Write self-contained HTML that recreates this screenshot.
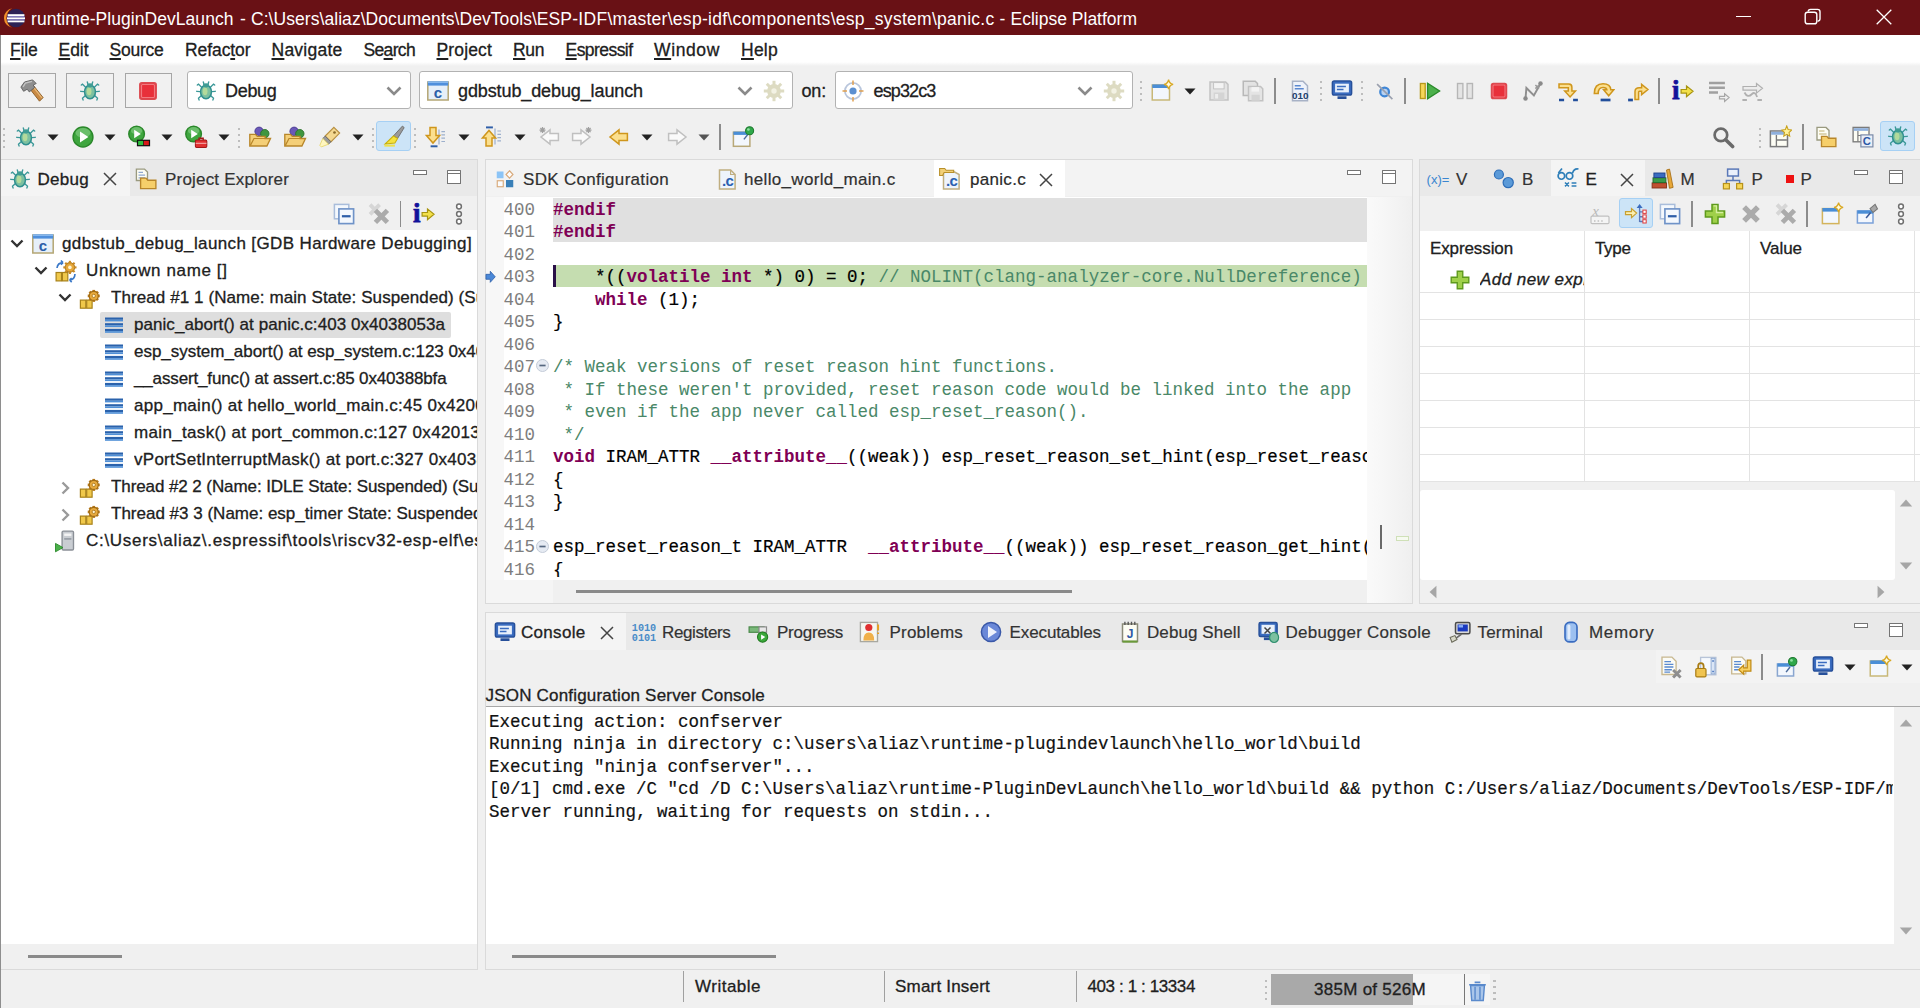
<!DOCTYPE html><html><head><meta charset="utf-8"><title>runtime-PluginDevLaunch - Eclipse Platform</title><style>
html,body{margin:0;padding:0;overflow:hidden;}
body{width:1920px;height:1008px;overflow:hidden;background:#f0f0f0;position:relative;font-family:"Liberation Sans",sans-serif;}
div,span.t,svg{position:absolute;}
span.t{white-space:pre;-webkit-text-stroke:0.3px;}
u{text-decoration-thickness:1.5px;text-underline-offset:2px;}
pre{margin:0;position:absolute;font-family:"Liberation Mono",monospace;white-space:pre;overflow:hidden;-webkit-text-stroke:0.2px;}
pre b{font-weight:700;-webkit-text-stroke:0;}
</style></head><body>
<div style="left:0px;top:0px;width:1920px;height:34.5px;background:#691115;"></div>
<svg style="left:4px;top:7px" width="22" height="22" viewBox="0 0 22 22"><path d="M8 1.2 A10 10 0 0 0 8 20.8 A11.4 11.4 0 0 1 8 1.2 Z" fill="#f0902a"/><circle cx="12" cy="11" r="9.2" fill="#2c2255"/><rect x="3.6" y="7.2" width="16.8" height="1.9" fill="#fff"/><rect x="3" y="10.3" width="18" height="1.9" fill="#fff"/><rect x="3.6" y="13.4" width="16.8" height="1.9" fill="#fff"/><rect x="3.6" y="9.1" width="16.8" height="1.2" fill="#8c86c8"/><rect x="3.4" y="12.2" width="17.2" height="1.2" fill="#8c86c8"/></svg>
<span class="t" id="t0" style="left:31px;top:6.75px;line-height:24px;font-size:17.5px;color:#ffffff;letter-spacing:0.049px;-webkit-text-stroke:0px;">runtime-PluginDevLaunch</span>
<span class="t" id="t1" style="left:240px;top:6.75px;line-height:24px;font-size:17.5px;color:#ffffff;letter-spacing:0.062px;-webkit-text-stroke:0px;">-</span>
<span class="t" id="t2" style="left:251px;top:6.75px;line-height:24px;font-size:17.5px;color:#ffffff;letter-spacing:0.055px;-webkit-text-stroke:0px;">C:\Users\aliaz\Documents\DevTools\ES</span>
<span class="t" id="t3" style="left:560.3px;top:6.75px;line-height:24px;font-size:17.5px;color:#ffffff;letter-spacing:0.281px;-webkit-text-stroke:0px;">P-IDF\master\esp-idf\components\esp_system\panic.c</span>
<span class="t" id="t4" style="left:999.5px;top:6.75px;line-height:24px;font-size:17.5px;color:#ffffff;letter-spacing:0.062px;-webkit-text-stroke:0px;">-</span>
<span class="t" id="t5" style="left:1010.5px;top:6.75px;line-height:24px;font-size:17.5px;color:#ffffff;letter-spacing:0.004px;-webkit-text-stroke:0px;">Eclipse Platform</span>
<div style="left:1736px;top:16px;width:15px;height:1.2px;background:#fff;"></div>
<svg style="left:1803px;top:7px" width="20" height="20" viewBox="0 0 20 20"><rect x="2.2" y="5.2" width="11.6" height="11.6" rx="2.4" fill="none" stroke="#fff" stroke-width="1.4"/><path d="M5.2 4.6 Q5.2 2.4 7.6 2.4 H14.6 Q17 2.4 17 4.8 V11.8 Q17 14 14.6 14.2" fill="none" stroke="#fff" stroke-width="1.4"/></svg>
<svg style="left:1874.5px;top:7.800000000000001px" width="18" height="18" viewBox="0 0 18 18"><path d="M1.7000000000000002 1.7000000000000002 L16.3 16.3 M16.3 1.7000000000000002 L1.7000000000000002 16.3" stroke="#fff" stroke-width="1.3" fill="none"/></svg>
<div style="left:0px;top:35px;width:1920px;height:27px;background:#ffffff;"></div>
<div style="left:0;top:62px;width:1920px;height:4px;background:linear-gradient(#fff,#f0f0f0)"></div>
<span class="t" id="t6" style="left:10px;top:37.50px;line-height:24px;font-size:17.5px;color:#202020;letter-spacing:-0.180px;"><u>F</u>ile</span>
<span class="t" id="t7" style="left:58.5px;top:37.50px;line-height:24px;font-size:17.5px;color:#202020;letter-spacing:-0.043px;"><u>E</u>dit</span>
<span class="t" id="t8" style="left:109.5px;top:37.50px;line-height:24px;font-size:17.5px;color:#202020;letter-spacing:-0.245px;"><u>S</u>ource</span>
<span class="t" id="t9" style="left:185px;top:37.50px;line-height:24px;font-size:17.5px;color:#202020;letter-spacing:-0.082px;">Refac<u>t</u>or</span>
<span class="t" id="t10" style="left:271.5px;top:37.50px;line-height:24px;font-size:17.5px;color:#202020;letter-spacing:0.240px;"><u>N</u>avigate</span>
<span class="t" id="t11" style="left:363.5px;top:37.50px;line-height:24px;font-size:17.5px;color:#202020;letter-spacing:-0.659px;">Se<u>a</u>rch</span>
<span class="t" id="t12" style="left:436.5px;top:37.50px;line-height:24px;font-size:17.5px;color:#202020;letter-spacing:0.145px;"><u>P</u>roject</span>
<span class="t" id="t13" style="left:513px;top:37.50px;line-height:24px;font-size:17.5px;color:#202020;letter-spacing:-0.370px;"><u>R</u>un</span>
<span class="t" id="t14" style="left:565.5px;top:37.50px;line-height:24px;font-size:17.5px;color:#202020;letter-spacing:-0.554px;"><u>E</u>spressif</span>
<span class="t" id="t15" style="left:654px;top:37.50px;line-height:24px;font-size:17.5px;color:#202020;letter-spacing:0.622px;"><u>W</u>indow</span>
<span class="t" id="t16" style="left:741px;top:37.50px;line-height:24px;font-size:17.5px;color:#202020;letter-spacing:0.250px;"><u>H</u>elp</span>
<div style="left:8px;top:73px;width:46px;height:34px;background:#f1f1f1;border:1.5px solid #a6a6a6;box-sizing:border-box;width:47.5px;height:35px;"></div>
<div style="left:66px;top:73px;width:46px;height:34px;background:#f1f1f1;border:1.5px solid #a6a6a6;box-sizing:border-box;width:47.5px;height:35px;"></div>
<div style="left:124.5px;top:73px;width:46px;height:34px;background:#f1f1f1;border:1.5px solid #a6a6a6;box-sizing:border-box;width:47.5px;height:35px;"></div>
<svg style="left:19.5px;top:78.5px" width="24" height="24" viewBox="0 0 16 16"><path d="M6.4 6.4 L9.2 4.6 L15.4 12.4 L13 14.8 Z" fill="#c98a44" stroke="#8a5a22" stroke-width=".6"/><path d="M7.4 6.6 L9 5.6 L14.6 12.6" fill="none" stroke="#e8b878" stroke-width=".8"/><path d="M.6 5.4 L3 2 L8.4 .6 L10.8 3 L8.8 4 L9.8 5.6 L6.2 8.6 L4.8 6.8 L2.4 8.2 Z" fill="#8e8e8e" stroke="#5e5e5e" stroke-width=".6"/><path d="M2 5.2 L3.6 2.8 L8 1.6" fill="none" stroke="#c4c4c4" stroke-width=".9"/></svg>
<svg style="left:78.0px;top:78.5px" width="24" height="24" viewBox="0 0 16 16"><g stroke="#3a9898" stroke-width=".9" fill="none" stroke-linecap="round"><path d="M5.2 5.6 L3 3.4 L2.2 4 M10.8 5.6 L13 3.4 L13.8 4 M4.3 8.4 L1.8 8.2 M11.7 8.4 L14.2 8.2 M5 11 L3 12.8 L3.4 14 M11 11 L13 12.8 L12.6 14 M6.8 4 L6.2 2 M9.2 4 L9.8 2"/></g><ellipse cx="8" cy="8.6" rx="3.6" ry="4.6" fill="#7cc0a0" stroke="#2f8f8f" stroke-width="1"/><ellipse cx="7.4" cy="8.2" rx="1.6" ry="2.6" fill="#b9dd9a" opacity=".9"/><ellipse cx="8" cy="4.2" rx="2" ry="1.4" fill="#3f9c94"/></svg>
<svg style="left:135.0px;top:77.5px" width="26" height="26" viewBox="0 0 16 16"><rect x="3" y="3" width="10" height="10" rx="1.2" fill="#e8303a" stroke="#dc4a50" stroke-width="1"/><rect x="4" y="4" width="8" height="8" rx=".6" fill="none" stroke="#f27a80" stroke-width=".7"/></svg>
<div style="left:186.5px;top:71px;width:224.0px;height:38px;background:#fff;border:1.5px solid #b2b2b2;border-radius:3px;box-sizing:border-box;"></div>
<div style="left:419px;top:71px;width:373.5px;height:38px;background:#fff;border:1.5px solid #b2b2b2;border-radius:3px;box-sizing:border-box;"></div>
<div style="left:834.5px;top:71px;width:298.5px;height:38px;background:#fff;border:1.5px solid #b2b2b2;border-radius:3px;box-sizing:border-box;"></div>
<svg style="left:194.0px;top:78.5px" width="24" height="24" viewBox="0 0 16 16"><g stroke="#3a9898" stroke-width=".9" fill="none" stroke-linecap="round"><path d="M5.2 5.6 L3 3.4 L2.2 4 M10.8 5.6 L13 3.4 L13.8 4 M4.3 8.4 L1.8 8.2 M11.7 8.4 L14.2 8.2 M5 11 L3 12.8 L3.4 14 M11 11 L13 12.8 L12.6 14 M6.8 4 L6.2 2 M9.2 4 L9.8 2"/></g><ellipse cx="8" cy="8.6" rx="3.6" ry="4.6" fill="#7cc0a0" stroke="#2f8f8f" stroke-width="1"/><ellipse cx="7.4" cy="8.2" rx="1.6" ry="2.6" fill="#b9dd9a" opacity=".9"/><ellipse cx="8" cy="4.2" rx="2" ry="1.4" fill="#3f9c94"/></svg>
<span class="t" id="t17" style="left:225px;top:79.25px;line-height:24px;font-size:18px;color:#202020;letter-spacing:-0.309px;">Debug</span>
<svg style="left:385px;top:84.5px" width="18" height="12" viewBox="0 0 18 12"><path d="M2.5 2.5 L9 9 L15.5 2.5" fill="none" stroke="#8a8a8a" stroke-width="2.6"/></svg>
<svg style="left:426.0px;top:78.5px" width="24" height="24" viewBox="0 0 16 16"><rect x="1.2" y="2" width="13.6" height="12" fill="#e6eff9" stroke="#b4a674" stroke-width="1"/><rect x="1.2" y="1.6" width="13.6" height="2.8" fill="#4f8fdc"/><rect x="1.2" y="1.6" width="13.6" height="1" fill="#8cbcf0"/><text x="8" y="12.4" font-family="Liberation Sans, sans-serif" font-size="10" font-weight="700" text-anchor="middle" fill="#2c5ea8">c</text></svg>
<span class="t" id="t18" style="left:458px;top:79.25px;line-height:24px;font-size:18px;color:#202020;letter-spacing:-0.109px;">gdbstub_debug_launch</span>
<svg style="left:736px;top:84.5px" width="18" height="12" viewBox="0 0 18 12"><path d="M2.5 2.5 L9 9 L15.5 2.5" fill="none" stroke="#8a8a8a" stroke-width="2.6"/></svg>
<svg style="left:761.5px;top:78.5px" width="24" height="24" viewBox="0 0 16 16"><g fill="#dddbc2"><circle cx="8" cy="8" r="4.6"/><rect x="7" y="1.2" width="2" height="3" transform="rotate(0 8 8)"/><rect x="7" y="1.2" width="2" height="3" transform="rotate(45 8 8)"/><rect x="7" y="1.2" width="2" height="3" transform="rotate(90 8 8)"/><rect x="7" y="1.2" width="2" height="3" transform="rotate(135 8 8)"/><rect x="7" y="1.2" width="2" height="3" transform="rotate(180 8 8)"/><rect x="7" y="1.2" width="2" height="3" transform="rotate(225 8 8)"/><rect x="7" y="1.2" width="2" height="3" transform="rotate(270 8 8)"/><rect x="7" y="1.2" width="2" height="3" transform="rotate(315 8 8)"/></g><circle cx="8" cy="8" r="1.8" fill="#f3f2e4"/></svg>
<span class="t" id="t19" style="left:801.5px;top:79.25px;line-height:24px;font-size:18px;color:#202020;letter-spacing:-0.177px;">on:</span>
<svg style="left:841.0px;top:78.5px" width="24" height="24" viewBox="0 0 16 16"><circle cx="8" cy="8" r="5.4" fill="#fff" stroke="#b9c6dc" stroke-width="1.2"/><circle cx="8" cy="8" r="2.4" fill="#5b8fd0"/><path d="M8 1 V4 M8 12 V15 M1 8 H4 M12 8 H15" stroke="#e0a050" stroke-width="1"/></svg>
<span class="t" id="t20" style="left:873.5px;top:79.25px;line-height:24px;font-size:18px;color:#202020;letter-spacing:-0.866px;">esp32c3</span>
<svg style="left:1076px;top:84.5px" width="18" height="12" viewBox="0 0 18 12"><path d="M2.5 2.5 L9 9 L15.5 2.5" fill="none" stroke="#8a8a8a" stroke-width="2.6"/></svg>
<svg style="left:1102.0px;top:78.5px" width="24" height="24" viewBox="0 0 16 16"><g fill="#dddbc2"><circle cx="8" cy="8" r="4.6"/><rect x="7" y="1.2" width="2" height="3" transform="rotate(0 8 8)"/><rect x="7" y="1.2" width="2" height="3" transform="rotate(45 8 8)"/><rect x="7" y="1.2" width="2" height="3" transform="rotate(90 8 8)"/><rect x="7" y="1.2" width="2" height="3" transform="rotate(135 8 8)"/><rect x="7" y="1.2" width="2" height="3" transform="rotate(180 8 8)"/><rect x="7" y="1.2" width="2" height="3" transform="rotate(225 8 8)"/><rect x="7" y="1.2" width="2" height="3" transform="rotate(270 8 8)"/><rect x="7" y="1.2" width="2" height="3" transform="rotate(315 8 8)"/></g><circle cx="8" cy="8" r="1.8" fill="#f3f2e4"/></svg>
<div style="left:1139.5px;top:80.75px;width:2.5px;height:2.5px;background:#bdbdbd"></div>
<div style="left:1139.5px;top:86.75px;width:2.5px;height:2.5px;background:#bdbdbd"></div>
<div style="left:1139.5px;top:92.75px;width:2.5px;height:2.5px;background:#bdbdbd"></div>
<div style="left:1139.5px;top:98.75px;width:2.5px;height:2.5px;background:#bdbdbd"></div>
<svg style="left:1150.0px;top:79.0px" width="24" height="24" viewBox="0 0 16 16"><rect x="1.5" y="4" width="11.5" height="10" fill="#f3f7fd" stroke="#c8b878" stroke-width="1"/><rect x="1.5" y="3.6" width="11.5" height="2.4" fill="#4a8ed6"/><path d="M12.4 .4 Q12.8 3 15.4 3.6 Q12.8 4.2 12.4 6.8 Q12 4.2 9.4 3.6 Q12 3 12.4 .4 Z" fill="#fffbe0" stroke="#d8a824" stroke-width=".9"/></svg>
<svg style="left:1184px;top:88px" width="12" height="7" viewBox="0 0 12 7"><path d="M0.5 0.5 H11.5 L6 6.5 Z" fill="#222"/></svg>
<svg style="left:1206.5px;top:79.0px" width="24" height="24" viewBox="0 0 16 16"><path d="M2 2 H12.4 L14 3.6 V14 H2 Z" fill="#e4e4e4" stroke="#c2c2c2" stroke-width="1"/><rect x="4.4" y="2.4" width="7" height="4.2" fill="#f3f3f3" stroke="#c0c0c0" stroke-width=".6"/><rect x="4.4" y="9" width="7.2" height="5" fill="#d4d4d4"/><rect x="5.4" y="10" width="2" height="3" fill="#ededed"/></svg>
<svg style="left:1241.0px;top:79.0px" width="24" height="24" viewBox="0 0 16 16"><path d="M1.5 1.5 H9.5 L11 3 V11 H1.5 Z" fill="#e3e3e3" stroke="#b8b8b8" stroke-width="1"/><path d="M5 5 H13 L14.5 6.5 V14.5 H5 Z" fill="#e4e4e4" stroke="#c2c2c2" stroke-width="1"/><rect x="7" y="5.4" width="5" height="3" fill="#f3f3f3"/><rect x="7" y="10.5" width="5.5" height="4" fill="#d4d4d4"/></svg>
<div style="left:1274px;top:78px;width:1.5px;height:26px;background:#8c8c8c"></div>
<svg style="left:1288.0px;top:79.0px" width="24" height="24" viewBox="0 0 16 16"><path d="M3 1.5 H10 L13 4.5 V14.5 H3 Z" fill="#eef2fa" stroke="#a8b2c6" stroke-width="1"/><path d="M4.5 4.5 H8.5 M4.5 6.5 H10.5" stroke="#5a88d0" stroke-width="1"/><text x="8.2" y="13.6" font-family="Liberation Sans, sans-serif" font-size="6.6" font-weight="700" text-anchor="middle" fill="#23416e">010</text></svg>
<div style="left:1319.5px;top:80.75px;width:2.5px;height:2.5px;background:#bdbdbd"></div>
<div style="left:1319.5px;top:86.75px;width:2.5px;height:2.5px;background:#bdbdbd"></div>
<div style="left:1319.5px;top:92.75px;width:2.5px;height:2.5px;background:#bdbdbd"></div>
<div style="left:1319.5px;top:98.75px;width:2.5px;height:2.5px;background:#bdbdbd"></div>
<svg style="left:1329.5px;top:78.0px" width="24" height="24" viewBox="0 0 16 16"><rect x="1.6" y="2" width="12.8" height="9.4" rx="1.2" fill="#3a6cc0" stroke="#27509a" stroke-width="1"/><rect x="3.4" y="3.8" width="9.2" height="5.8" fill="#e8f0fb"/><path d="M4.6 5.6 H10.6 M4.6 7.6 H9" stroke="#3a6cc0" stroke-width="1"/><rect x="5" y="12.2" width="6" height="1.8" fill="#27509a"/></svg>
<div style="left:1360.5px;top:80.75px;width:2.5px;height:2.5px;background:#bdbdbd"></div>
<div style="left:1360.5px;top:86.75px;width:2.5px;height:2.5px;background:#bdbdbd"></div>
<div style="left:1360.5px;top:92.75px;width:2.5px;height:2.5px;background:#bdbdbd"></div>
<div style="left:1360.5px;top:98.75px;width:2.5px;height:2.5px;background:#bdbdbd"></div>
<svg style="left:1372.0px;top:79.0px" width="24" height="24" viewBox="0 0 16 16"><circle cx="8.4" cy="8.6" r="2.9" fill="#b8d2f2" stroke="#3f86d6" stroke-width="1.5"/><path d="M3.4 3.4 L13.6 13.4" stroke="#9aa0ae" stroke-width="1.1"/></svg>
<div style="left:1404px;top:78px;width:1.5px;height:26px;background:#8c8c8c"></div>
<svg style="left:1418.0px;top:79.0px" width="24" height="24" viewBox="0 0 16 16"><rect x="1.6" y="3" width="3.2" height="10" fill="#f6d658" stroke="#b89a1c" stroke-width=".9"/><path d="M6.4 2.8 L14.4 8 L6.4 13.2 Z" fill="#4bb04b" stroke="#2a8a2a" stroke-width=".9"/></svg>
<svg style="left:1452.5px;top:79.0px" width="24" height="24" viewBox="0 0 16 16"><rect x="3" y="3" width="3.6" height="10" fill="#e4e4e4" stroke="#b6b6b6" stroke-width=".9"/><rect x="9.4" y="3" width="3.6" height="10" fill="#e4e4e4" stroke="#b6b6b6" stroke-width=".9"/></svg>
<svg style="left:1487.0px;top:79.0px" width="24" height="24" viewBox="0 0 16 16"><rect x="3" y="3" width="10" height="10" rx="1.2" fill="#e8303a" stroke="#dc4a50" stroke-width="1"/><rect x="4" y="4" width="8" height="8" rx=".6" fill="none" stroke="#f27a80" stroke-width=".7"/></svg>
<svg style="left:1520.5px;top:79.0px" width="24" height="24" viewBox="0 0 16 16"><path d="M3 13 L3.6 6 L8.6 11 L13 3" fill="none" stroke="#8f8f8f" stroke-width="1.3"/><circle cx="3" cy="13" r="1.5" fill="#8a8a8a"/><circle cx="13" cy="3" r="1.5" fill="#8a8a8a"/><path d="M9.6 4 L12 6.4 M12 4 L9.6 6.4" stroke="#9a9a9a" stroke-width="1"/></svg>
<svg style="left:1555.5px;top:79.0px" width="24" height="24" viewBox="0 0 16 16"><path d="M2 3.4 H8.6 Q10.6 3.4 10.6 5.6 V8 H13 L9.4 12 L5.8 8 H8.2 V5.8 H2 Z" fill="#fbdf8e" stroke="#cf961c" stroke-width="1"/><path d="M2 14 H5.4 M11.4 14 H14.6" stroke="#224f9c" stroke-width="1.8"/></svg>
<svg style="left:1590.5px;top:79.0px" width="24" height="24" viewBox="0 0 16 16"><path d="M2.2 9.6 Q2.2 3.2 8 3.2 Q13 3.2 13.2 7.2 H15.2 L11.8 11.2 L8.4 7.2 H10.6 Q10.4 5.6 8 5.6 Q4.8 5.6 4.8 9.6 Z" fill="#fbdf8e" stroke="#cf961c" stroke-width="1"/><path d="M6.4 14 H13" stroke="#224f9c" stroke-width="1.8"/></svg>
<svg style="left:1625.5px;top:79.0px" width="24" height="24" viewBox="0 0 16 16"><path d="M6 13.6 V8.4 Q6 5.8 8.8 5.8 H10.4 V3.6 L14.6 7 L10.4 10.4 V8.2 H9 Q8.4 8.2 8.4 9 V13.6 Z" fill="#fbdf8e" stroke="#cf961c" stroke-width="1"/><path d="M1.4 14 H4.6" stroke="#224f9c" stroke-width="1.8"/></svg>
<div style="left:1658px;top:78px;width:1.5px;height:26px;background:#8c8c8c"></div>
<svg style="left:1669.5px;top:79.0px" width="24" height="24" viewBox="0 0 16 16"><text x="3.8" y="13.4" font-family="Liberation Serif, serif" font-size="18" font-weight="700" text-anchor="middle" fill="#12129a" stroke="#12129a" stroke-width=".5">i</text><path d="M7.4 7 H11 V4.6 L15.4 8.2 L11 11.8 V9.4 H7.4 Z" fill="#f3e04a" stroke="#a89410" stroke-width=".8"/></svg>
<svg style="left:1705.5px;top:79.0px" width="24" height="24" viewBox="0 0 16 16"><path d="M2 2.6 H12.6 M2 5.8 H12.6 M2 9 H8" stroke="#a0a0a0" stroke-width="1.7"/><path d="M9 11.6 H12.4 V9.8 L15.4 12.4 L12.4 15 V13.2 H9 Z" fill="#f0f0f0" stroke="#a6a6a6" stroke-width=".8"/></svg>
<svg style="left:1739.5px;top:79.0px" width="24" height="24" viewBox="0 0 16 16"><path d="M2 5 H11 V3 L15 6.2 L11 9.4 V7.4 H2 Z" fill="#ececec" stroke="#b0b0b0" stroke-width=".8"/><path d="M3 9 Q5 13 8 10 Q10 8 11.4 12" fill="none" stroke="#b0b0b0" stroke-width="1.2"/><path d="M1.6 14 H4.6 M11.6 14 H14.6" stroke="#b0b0b0" stroke-width="1.3"/></svg>
<div style="left:2.5px;top:127.75px;width:2.5px;height:2.5px;background:#bdbdbd"></div>
<div style="left:2.5px;top:133.75px;width:2.5px;height:2.5px;background:#bdbdbd"></div>
<div style="left:2.5px;top:139.75px;width:2.5px;height:2.5px;background:#bdbdbd"></div>
<div style="left:2.5px;top:145.75px;width:2.5px;height:2.5px;background:#bdbdbd"></div>
<svg style="left:14.0px;top:125.0px" width="24" height="24" viewBox="0 0 16 16"><g stroke="#3a9898" stroke-width=".9" fill="none" stroke-linecap="round"><path d="M5.2 5.6 L3 3.4 L2.2 4 M10.8 5.6 L13 3.4 L13.8 4 M4.3 8.4 L1.8 8.2 M11.7 8.4 L14.2 8.2 M5 11 L3 12.8 L3.4 14 M11 11 L13 12.8 L12.6 14 M6.8 4 L6.2 2 M9.2 4 L9.8 2"/></g><ellipse cx="8" cy="8.6" rx="3.6" ry="4.6" fill="#7cc0a0" stroke="#2f8f8f" stroke-width="1"/><ellipse cx="7.4" cy="8.2" rx="1.6" ry="2.6" fill="#b9dd9a" opacity=".9"/><ellipse cx="8" cy="4.2" rx="2" ry="1.4" fill="#3f9c94"/></svg>
<svg style="left:47px;top:134px" width="12" height="7" viewBox="0 0 12 7"><path d="M0.5 0.5 H11.5 L6 6.5 Z" fill="#222"/></svg>
<svg style="left:70.5px;top:125.0px" width="24" height="24" viewBox="0 0 16 16"><circle cx="8" cy="8" r="6.6" fill="#3fa63f" stroke="#2a882a" stroke-width="1"/><ellipse cx="8" cy="5.2" rx="5" ry="3.2" fill="#8fd48f" opacity=".55"/><path d="M6 4.4 L11.6 8 L6 11.6 Z" fill="#fff"/></svg>
<svg style="left:104px;top:134px" width="12" height="7" viewBox="0 0 12 7"><path d="M0.5 0.5 H11.5 L6 6.5 Z" fill="#222"/></svg>
<svg style="left:127.0px;top:125.0px" width="24" height="24" viewBox="0 0 16 16"><circle cx="6.4" cy="6" r="5.2" fill="#3fa63f" stroke="#2a882a" stroke-width="1"/><ellipse cx="6.4" cy="3.8" rx="3.8" ry="2.4" fill="#8fd48f" opacity=".55"/><path d="M4.8 3.2 L9.2 6 L4.8 8.8 Z" fill="#fff"/><rect x="6.6" y="9.8" width="8.8" height="4.4" fill="#111"/><rect x="7.4" y="10.6" width="3.4" height="2.8" fill="#2fbf3f"/><rect x="11.2" y="10.6" width="3.4" height="2.8" fill="#d81818"/></svg>
<svg style="left:161px;top:134px" width="12" height="7" viewBox="0 0 12 7"><path d="M0.5 0.5 H11.5 L6 6.5 Z" fill="#222"/></svg>
<svg style="left:184.0px;top:125.0px" width="24" height="24" viewBox="0 0 16 16"><circle cx="6.4" cy="6" r="5.2" fill="#3fa63f" stroke="#2a882a" stroke-width="1"/><ellipse cx="6.4" cy="3.8" rx="3.8" ry="2.4" fill="#8fd48f" opacity=".55"/><path d="M4.8 3.2 L9.2 6 L4.8 8.8 Z" fill="#fff"/><rect x="7.6" y="10" width="7.6" height="5" rx=".8" fill="#e03030" stroke="#a01818" stroke-width=".7"/><path d="M10 10 V8.8 H12.8 V10" fill="none" stroke="#a01818" stroke-width=".9"/><path d="M7.8 12.2 H15" stroke="#f6b0b0" stroke-width=".7"/></svg>
<svg style="left:218px;top:134px" width="12" height="7" viewBox="0 0 12 7"><path d="M0.5 0.5 H11.5 L6 6.5 Z" fill="#222"/></svg>
<div style="left:237.5px;top:127.75px;width:2.5px;height:2.5px;background:#bdbdbd"></div>
<div style="left:237.5px;top:133.75px;width:2.5px;height:2.5px;background:#bdbdbd"></div>
<div style="left:237.5px;top:139.75px;width:2.5px;height:2.5px;background:#bdbdbd"></div>
<div style="left:237.5px;top:145.75px;width:2.5px;height:2.5px;background:#bdbdbd"></div>
<svg style="left:248.0px;top:125.0px" width="24" height="24" viewBox="0 0 16 16"><circle cx="7.4" cy="4.2" r="2.8" fill="#6a58b8" stroke="#4a3a90" stroke-width=".6"/><circle cx="11.2" cy="5.8" r="2.8" fill="#3f963f" stroke="#2a702a" stroke-width=".6"/><path d="M1.2 14 V6.2 H5 L6.2 7.6 H11.4 V9 H15 L12.6 14 Z" fill="#f4cf78" stroke="#b8862a" stroke-width=".9"/><path d="M1.6 13.6 L4 9 H15" fill="none" stroke="#b8862a" stroke-width=".8"/></svg>
<svg style="left:283.0px;top:125.0px" width="24" height="24" viewBox="0 0 16 16"><circle cx="7.4" cy="4.2" r="2.8" fill="#6a58b8" stroke="#4a3a90" stroke-width=".6"/><circle cx="11.2" cy="5.8" r="2.8" fill="#3f963f" stroke="#2a702a" stroke-width=".6"/><path d="M1.2 14 V6.2 H5 L6.2 7.6 H11.4 V9 H15 L12.6 14 Z" fill="#f4cf78" stroke="#b8862a" stroke-width=".9"/><path d="M1.6 13.6 L4 9 H15" fill="none" stroke="#b8862a" stroke-width=".8"/></svg>
<svg style="left:318.0px;top:125.0px" width="24" height="24" viewBox="0 0 16 16"><path d="M10.6 1.6 L14.4 5.4 L8.6 11.2 L4.8 7.4 Z" fill="#f4d890" stroke="#b89040" stroke-width=".8"/><path d="M4.8 7.4 L8.6 11.2 L7 12.8 L3.2 9 Z" fill="#9a9a9a" stroke="#6a6a6a" stroke-width=".6"/><path d="M3.2 9 L7 12.8 L2.2 14.6 L1.2 13.6 Z" fill="#fff6c0" stroke="#e8d870" stroke-width=".6"/><circle cx="11" cy="5" r=".9" fill="#8a6a2a"/></svg>
<svg style="left:351.5px;top:134px" width="12" height="7" viewBox="0 0 12 7"><path d="M0.5 0.5 H11.5 L6 6.5 Z" fill="#222"/></svg>
<div style="left:371.5px;top:127.75px;width:2.5px;height:2.5px;background:#bdbdbd"></div>
<div style="left:371.5px;top:133.75px;width:2.5px;height:2.5px;background:#bdbdbd"></div>
<div style="left:371.5px;top:139.75px;width:2.5px;height:2.5px;background:#bdbdbd"></div>
<div style="left:371.5px;top:145.75px;width:2.5px;height:2.5px;background:#bdbdbd"></div>
<div style="left:376px;top:121px;width:34.5px;height:30px;background:#cce4f7;border:1px solid #a6d0f4;border-radius:3px;box-sizing:border-box;"></div>
<svg style="left:382.0px;top:124.0px" width="24" height="24" viewBox="0 0 16 16"><path d="M13.6 1.4 L14.8 2.4 L10.4 9.6 L7.6 8 Z" fill="#9a9a9a" stroke="#6c6c6c" stroke-width=".6"/><path d="M7.6 8 L10.4 9.6 L8.6 12.6 L2 13.4 Z" fill="#f5e23c" stroke="#c8b010" stroke-width=".7"/><path d="M1.6 14.4 H8.6" stroke="#f0e04a" stroke-width="1.4"/></svg>
<div style="left:413.5px;top:127.75px;width:2.5px;height:2.5px;background:#bdbdbd"></div>
<div style="left:413.5px;top:133.75px;width:2.5px;height:2.5px;background:#bdbdbd"></div>
<div style="left:413.5px;top:139.75px;width:2.5px;height:2.5px;background:#bdbdbd"></div>
<div style="left:413.5px;top:145.75px;width:2.5px;height:2.5px;background:#bdbdbd"></div>
<svg style="left:424.0px;top:125.0px" width="24" height="24" viewBox="0 0 16 16"><path d="M10 3 V13 M11.6 4.4 H14 M11.6 6.6 H14 M11.6 8.8 H14 M11.6 11 H14" stroke="#9db0cc" stroke-width=".8"/><path d="M4 1.6 H8 V7 H10.4 L6 12 L1.6 7 H4 Z" fill="#fbdf8e" stroke="#cf961c" stroke-width="1"/><path d="M4.4 14.2 H9" stroke="#2e5ea8" stroke-width="1.3"/></svg>
<svg style="left:458px;top:134px" width="12" height="7" viewBox="0 0 12 7"><path d="M0.5 0.5 H11.5 L6 6.5 Z" fill="#222"/></svg>
<svg style="left:480.0px;top:125.0px" width="24" height="24" viewBox="0 0 16 16"><path d="M10 2.4 V13 M11.6 4 H14 M11.6 6.2 H14 M11.6 8.4 H14 M11.6 10.6 H14" stroke="#9db0cc" stroke-width=".8"/><path d="M4 14 H8 V8.6 H10.4 L6 3.6 L1.6 8.6 H4 Z" fill="#fbdf8e" stroke="#cf961c" stroke-width="1"/><path d="M4 1.6 H8.6" stroke="#2e5ea8" stroke-width="1.3"/></svg>
<svg style="left:514px;top:134px" width="12" height="7" viewBox="0 0 12 7"><path d="M0.5 0.5 H11.5 L6 6.5 Z" fill="#222"/></svg>
<svg style="left:538.0px;top:125.0px" width="24" height="24" viewBox="0 0 16 16"><path d="M13.6 5.6 H8 V3.2 L2 8 L8 12.8 V10.4 H13.6 Z" fill="#fafafa" stroke="#c0c0c0" stroke-width="1"/><path d="M1 3.4 H5 M3 1.4 V5.4 M1.6 2 L4.4 4.8 M4.4 2 L1.6 4.8" stroke="#a0a0a0" stroke-width=".8"/></svg>
<svg style="left:569.0px;top:125.0px" width="24" height="24" viewBox="0 0 16 16"><path d="M13.6 5.6 H8 V3.2 L2 8 L8 12.8 V10.4 H13.6 Z" fill="#fafafa" stroke="#c0c0c0" stroke-width="1" transform="translate(16 0) scale(-1 1)"/><path d="M11 3.4 H15 M13 1.4 V5.4 M11.6 2 L14.4 4.8 M14.4 2 L11.6 4.8" stroke="#a0a0a0" stroke-width=".8"/></svg>
<svg style="left:607.0px;top:125.0px" width="24" height="24" viewBox="0 0 16 16"><path d="M13.6 5.6 H8 V3.2 L2 8 L8 12.8 V10.4 H13.6 Z" fill="#fbdf8e" stroke="#cf961c" stroke-width="1"/></svg>
<svg style="left:641px;top:134px" width="12" height="7" viewBox="0 0 12 7"><path d="M0.5 0.5 H11.5 L6 6.5 Z" fill="#222"/></svg>
<svg style="left:665.0px;top:125.0px" width="24" height="24" viewBox="0 0 16 16"><path d="M13.6 5.6 H8 V3.2 L2 8 L8 12.8 V10.4 H13.6 Z" fill="#fafafa" stroke="#c0c0c0" stroke-width="1" transform="translate(16 0) scale(-1 1)"/></svg>
<svg style="left:698px;top:134px" width="12" height="7" viewBox="0 0 12 7"><path d="M0.5 0.5 H11.5 L6 6.5 Z" fill="#555"/></svg>
<div style="left:719px;top:124px;width:1.5px;height:26px;background:#8c8c8c"></div>
<svg style="left:731.0px;top:125.0px" width="24" height="24" viewBox="0 0 16 16"><rect x="1.6" y="4.8" width="11" height="9.4" fill="#f3f7fd" stroke="#b8a878" stroke-width="1"/><rect x="1.6" y="4.4" width="11" height="2.2" fill="#4a8ed6"/><path d="M8.6 9.6 L11 6.6" stroke="#4a6a9a" stroke-width="1"/><circle cx="12.4" cy="3.8" r="2.7" fill="#2fa84a" stroke="#1f7a30" stroke-width=".7"/><circle cx="11.6" cy="3" r=".9" fill="#8fe0a0"/></svg>
<svg style="left:1710.5px;top:125.0px" width="24" height="24" viewBox="0 0 16 16"><circle cx="6.6" cy="6.6" r="4.2" fill="none" stroke="#6a6a6a" stroke-width="1.8"/><path d="M9.8 9.8 L14.4 14.4" stroke="#6a6a6a" stroke-width="2.4" stroke-linecap="round"/></svg>
<div style="left:1758.5px;top:127.75px;width:2.5px;height:2.5px;background:#bdbdbd"></div>
<div style="left:1758.5px;top:133.75px;width:2.5px;height:2.5px;background:#bdbdbd"></div>
<div style="left:1758.5px;top:139.75px;width:2.5px;height:2.5px;background:#bdbdbd"></div>
<div style="left:1758.5px;top:145.75px;width:2.5px;height:2.5px;background:#bdbdbd"></div>
<svg style="left:1768.0px;top:125.0px" width="24" height="24" viewBox="0 0 16 16"><rect x="1.6" y="4" width="11.4" height="10.4" fill="#fdfdf4" stroke="#7a7a7a" stroke-width="1"/><rect x="2.1" y="4.5" width="10.4" height="2" fill="#8fb0dc"/><path d="M5.6 6.6 V14 M5.6 10 H12.6" stroke="#7a7a7a" stroke-width=".9"/><path d="M12.5 .6 L13.4 3 L15.8 3.4 L14 5 L14.5 7.4 L12.5 6.2 L10.5 7.4 L11 5 L9.2 3.4 L11.6 3 Z" fill="#fff29a" stroke="#c9a21e" stroke-width=".7"/></svg>
<div style="left:1802px;top:124px;width:1.5px;height:26px;background:#8c8c8c"></div>
<svg style="left:1814.0px;top:125.0px" width="24" height="24" viewBox="0 0 16 16"><path d="M2 1.6 H8 L10 3.6 V10 H2 Z" fill="#fdfdf4" stroke="#9a9a80" stroke-width=".9"/><path d="M3.4 4 H7 M3.4 6 H8.4" stroke="#c0b070" stroke-width=".8"/><path d="M5 14.4 V7.6 H8.6 L9.6 8.8 H14.6 V14.4 Z" fill="#f6cf6a" stroke="#b8862a" stroke-width=".9"/></svg>
<svg style="left:1850.5px;top:125.0px" width="24" height="24" viewBox="0 0 16 16"><rect x="1.4" y="1.6" width="10.6" height="9.6" fill="#fdfdf4" stroke="#7a7a7a" stroke-width=".9"/><rect x="1.9" y="2.1" width="9.6" height="1.8" fill="#8fb0dc"/><path d="M4.6 4 V11 M4.6 7 H12" stroke="#7a7a7a" stroke-width=".8"/><rect x="6.6" y="6.6" width="8" height="8" fill="#e8eef8" stroke="#7a8aa8" stroke-width=".8"/><text x="10.6" y="13.4" font-family="Liberation Sans, sans-serif" font-size="7.5" font-weight="700" text-anchor="middle" fill="#2c58a6">C</text></svg>
<div style="left:1880px;top:121px;width:35px;height:30px;background:#cce4f7;border:1px solid #a6d0f4;border-radius:3px;box-sizing:border-box;"></div>
<svg style="left:1885.5px;top:124.0px" width="24" height="24" viewBox="0 0 16 16"><g stroke="#3a9898" stroke-width=".9" fill="none" stroke-linecap="round"><path d="M5.2 5.6 L3 3.4 L2.2 4 M10.8 5.6 L13 3.4 L13.8 4 M4.3 8.4 L1.8 8.2 M11.7 8.4 L14.2 8.2 M5 11 L3 12.8 L3.4 14 M11 11 L13 12.8 L12.6 14 M6.8 4 L6.2 2 M9.2 4 L9.8 2"/></g><ellipse cx="8" cy="8.6" rx="3.6" ry="4.6" fill="#7cc0a0" stroke="#2f8f8f" stroke-width="1"/><ellipse cx="7.4" cy="8.2" rx="1.6" ry="2.6" fill="#b9dd9a" opacity=".9"/><ellipse cx="8" cy="4.2" rx="2" ry="1.4" fill="#3f9c94"/></svg>
<div style="left:0px;top:158.5px;width:478px;height:811.0px;background:#f0f0f0;border:1px solid #dadada;box-sizing:border-box;"></div>
<div style="left:1px;top:159.5px;width:476px;height:36.5px;background:#e9e9e9;"></div>
<div style="left:1px;top:159.5px;width:129px;height:36.5px;background:#f4f4f4;"></div>
<svg style="left:8.0px;top:167.0px" width="24" height="24" viewBox="0 0 16 16"><g stroke="#3a9898" stroke-width=".9" fill="none" stroke-linecap="round"><path d="M5.2 5.6 L3 3.4 L2.2 4 M10.8 5.6 L13 3.4 L13.8 4 M4.3 8.4 L1.8 8.2 M11.7 8.4 L14.2 8.2 M5 11 L3 12.8 L3.4 14 M11 11 L13 12.8 L12.6 14 M6.8 4 L6.2 2 M9.2 4 L9.8 2"/></g><ellipse cx="8" cy="8.6" rx="3.6" ry="4.6" fill="#7cc0a0" stroke="#2f8f8f" stroke-width="1"/><ellipse cx="7.4" cy="8.2" rx="1.6" ry="2.6" fill="#b9dd9a" opacity=".9"/><ellipse cx="8" cy="4.2" rx="2" ry="1.4" fill="#3f9c94"/></svg>
<span class="t" id="t21" style="left:37.5px;top:167.75px;line-height:24px;font-size:17px;color:#202020;letter-spacing:0.278px;">Debug</span>
<svg style="left:102.0px;top:171.0px" width="16" height="16" viewBox="0 0 16 16"><path d="M2.0 2.0 L14.0 14.0 M14.0 2.0 L2.0 14.0" stroke="#444" stroke-width="1.5" fill="none"/></svg>
<svg style="left:134.0px;top:167.0px" width="24" height="24" viewBox="0 0 16 16"><path d="M1.6 1.4 H7 L9 3.4 V9 H1.6 Z" fill="#fdfdf4" stroke="#9a9a80" stroke-width=".9"/><path d="M3 3.6 H6 M3 5.4 H7.4 M3 7.2 H7.4" stroke="#8fa8d0" stroke-width=".8"/><path d="M4.4 14.4 V7.4 H8 L9.2 8.8 H14.6 V14.4 Z" fill="#f6cf6a" stroke="#b8862a" stroke-width=".9"/></svg>
<span class="t" id="t22" style="left:165px;top:167.75px;line-height:24px;font-size:17px;color:#333;letter-spacing:0.191px;-webkit-text-stroke:0.2px;">Project Explorer</span>
<div style="left:412.5px;top:170px;width:12px;height:3px;border:1.5px solid #747474;background:#fff;border-radius:.5px"></div>
<div style="left:446.5px;top:170.0px;width:12px;height:11.5px;border:1.5px solid #747474;background:#fff;border-radius:.5px"></div>
<div style="left:447px;top:172.7px;width:14px;height:1.2px;background:#747474"></div>
<svg style="left:332.0px;top:202.0px" width="24" height="24" viewBox="0 0 16 16"><rect x="1.6" y="1.6" width="9.6" height="9.6" fill="#f4f8fd" stroke="#a9bddb" stroke-width="1"/><rect x="4.6" y="4.6" width="9.8" height="9.8" fill="#f4f8fd" stroke="#6f93c8" stroke-width="1.1"/><path d="M6.6 9.5 H12.4" stroke="#2e5ea8" stroke-width="1.5"/></svg>
<svg style="left:367.0px;top:202.0px" width="24" height="24" viewBox="0 0 16 16"><path d="M2 1.8 L8.4 8.2 M8.4 1.8 L2 8.2" stroke="#d6d6d6" stroke-width="2.6"/><path d="M5.6 5.6 L13.6 13.6 M13.6 5.6 L5.6 13.6" stroke="#ababab" stroke-width="3.2"/></svg>
<div style="left:399.5px;top:201px;width:1.5px;height:26px;background:#8c8c8c"></div>
<svg style="left:410.5px;top:202.0px" width="24" height="24" viewBox="0 0 16 16"><text x="3.8" y="13.4" font-family="Liberation Serif, serif" font-size="18" font-weight="700" text-anchor="middle" fill="#12129a" stroke="#12129a" stroke-width=".5">i</text><path d="M7.4 7 H11 V4.6 L15.4 8.2 L11 11.8 V9.4 H7.4 Z" fill="#f3e04a" stroke="#a89410" stroke-width=".8"/></svg>
<svg style="left:447.0px;top:202.0px" width="24" height="24" viewBox="0 0 16 16"><circle cx="8" cy="3" r="1.6" fill="#fff" stroke="#707070" stroke-width="1"/><circle cx="8" cy="8" r="1.6" fill="#fff" stroke="#707070" stroke-width="1"/><circle cx="8" cy="13" r="1.6" fill="#fff" stroke="#707070" stroke-width="1"/></svg>
<div style="left:1px;top:230px;width:476px;height:714px;background:#fff;"></div>
<div style="left:99.5px;top:311.5px;width:351.5px;height:26px;background:#dedede;border-radius:2px;"></div>
<svg style="left:9px;top:237.5px" width="16" height="12" viewBox="0 0 16 12"><path d="M2.5 2.5 L8 8 L13.5 2.5" fill="none" stroke="#333" stroke-width="2.4"/></svg>
<svg style="left:30.5px;top:231.5px" width="24" height="24" viewBox="0 0 16 16"><rect x="1.2" y="2" width="13.6" height="12" fill="#e6eff9" stroke="#b4a674" stroke-width="1"/><rect x="1.2" y="1.6" width="13.6" height="2.8" fill="#4f8fdc"/><rect x="1.2" y="1.6" width="13.6" height="1" fill="#8cbcf0"/><text x="8" y="12.4" font-family="Liberation Sans, sans-serif" font-size="10" font-weight="700" text-anchor="middle" fill="#2c5ea8">c</text></svg>
<span class="t" id="t23" style="left:62px;top:232.25px;line-height:24px;font-size:17px;color:#202020;letter-spacing:0.374px;">gdbstub_debug_launch [GDB Hardware Debugging]</span>
<svg style="left:32.5px;top:264.5px" width="16" height="12" viewBox="0 0 16 12"><path d="M2.5 2.5 L8 8 L13.5 2.5" fill="none" stroke="#333" stroke-width="2.4"/></svg>
<svg style="left:54.0px;top:258.5px" width="24" height="24" viewBox="0 0 16 16"><rect x="1.4" y="9" width="3.6" height="5.6" fill="#f0c84a" stroke="#a8821a" stroke-width=".8"/><rect x="5.6" y="9" width="3.6" height="5.6" fill="#f0c84a" stroke="#a8821a" stroke-width=".8"/><circle cx="10.6" cy="5.6" r="3.2" fill="#e6a83a" stroke="#9a6a14" stroke-width=".6"/><rect x="9.9" y="1.2" width="1.4" height="1.8" fill="#c88a24" transform="rotate(0 10.6 5.6)"/><rect x="9.9" y="1.2" width="1.4" height="1.8" fill="#c88a24" transform="rotate(45 10.6 5.6)"/><rect x="9.9" y="1.2" width="1.4" height="1.8" fill="#c88a24" transform="rotate(90 10.6 5.6)"/><rect x="9.9" y="1.2" width="1.4" height="1.8" fill="#c88a24" transform="rotate(135 10.6 5.6)"/><rect x="9.9" y="1.2" width="1.4" height="1.8" fill="#c88a24" transform="rotate(180 10.6 5.6)"/><rect x="9.9" y="1.2" width="1.4" height="1.8" fill="#c88a24" transform="rotate(225 10.6 5.6)"/><rect x="9.9" y="1.2" width="1.4" height="1.8" fill="#c88a24" transform="rotate(270 10.6 5.6)"/><rect x="9.9" y="1.2" width="1.4" height="1.8" fill="#c88a24" transform="rotate(315 10.6 5.6)"/><circle cx="10.6" cy="5.6" r="1.2" fill="#fff3d0"/><path d="M2 6 Q2.4 2.4 6 2.4 M6 2.4 L4.6 1 M6 2.4 L4.6 3.8" fill="none" stroke="#3a78c8" stroke-width="1.1"/><path d="M14 10 Q13.8 13.8 10.4 14 M10.4 14 L11.8 12.8 M10.4 14 L11.8 15.4" fill="none" stroke="#3a78c8" stroke-width="1.1"/></svg>
<span class="t" id="t24" style="left:86px;top:259.25px;line-height:24px;font-size:17px;color:#202020;letter-spacing:0.614px;">Unknown name []</span>
<svg style="left:56.5px;top:291.5px" width="16" height="12" viewBox="0 0 16 12"><path d="M2.5 2.5 L8 8 L13.5 2.5" fill="none" stroke="#333" stroke-width="2.4"/></svg>
<svg style="left:78.0px;top:285.5px" width="24" height="24" viewBox="0 0 16 16"><rect x="1.6" y="9.4" width="3.6" height="5.4" fill="#f0c84a" stroke="#a8821a" stroke-width=".8"/><rect x="5.8" y="9.4" width="3.6" height="5.4" fill="#f0c84a" stroke="#a8821a" stroke-width=".8"/><rect x="9.6" y="2.6" width="1.8" height="2" fill="#b87a1c" transform="rotate(0 10.5 6.6)"/><rect x="9.6" y="2.6" width="1.8" height="2" fill="#b87a1c" transform="rotate(45 10.5 6.6)"/><rect x="9.6" y="2.6" width="1.8" height="2" fill="#b87a1c" transform="rotate(90 10.5 6.6)"/><rect x="9.6" y="2.6" width="1.8" height="2" fill="#b87a1c" transform="rotate(135 10.5 6.6)"/><rect x="9.6" y="2.6" width="1.8" height="2" fill="#b87a1c" transform="rotate(180 10.5 6.6)"/><rect x="9.6" y="2.6" width="1.8" height="2" fill="#b87a1c" transform="rotate(225 10.5 6.6)"/><rect x="9.6" y="2.6" width="1.8" height="2" fill="#b87a1c" transform="rotate(270 10.5 6.6)"/><rect x="9.6" y="2.6" width="1.8" height="2" fill="#b87a1c" transform="rotate(315 10.5 6.6)"/><circle cx="10.5" cy="6.6" r="3" fill="#e8aa3c" stroke="#a06c14" stroke-width=".8"/><circle cx="10.5" cy="6.6" r="1.1" fill="#fff3d0" stroke="#a06c14" stroke-width=".5"/></svg>
<span class="t" id="t25" style="left:111px;top:286.25px;line-height:24px;font-size:17px;color:#202020;letter-spacing:0.085px;width:366px;overflow:hidden;">Thread #1 1 (Name: main State: Suspended) (Suspended : Signal : SIGTRAP:Trace/breakpoint trap)</span>
<svg style="left:102.0px;top:312.5px" width="24" height="24" viewBox="0 0 16 16"><rect x="2" y="3" width="12" height="1.5" fill="#2a62ac"/><rect x="2" y="4.5" width="12" height="1.1" fill="#4f8fd6"/><rect x="2" y="6.8" width="12" height="1.5" fill="#2a62ac"/><rect x="2" y="8.3" width="12" height="1.1" fill="#4f8fd6"/><rect x="2" y="10.6" width="12" height="1.5" fill="#2a62ac"/><rect x="2" y="12.1" width="12" height="1.1" fill="#4f8fd6"/></svg>
<span class="t" id="t26" style="left:134px;top:313.25px;line-height:24px;font-size:17px;color:#202020;letter-spacing:0.050px;">panic_abort() at panic.c:403 0x4038053a</span>
<svg style="left:102.0px;top:339.5px" width="24" height="24" viewBox="0 0 16 16"><rect x="2" y="3" width="12" height="1.5" fill="#2a62ac"/><rect x="2" y="4.5" width="12" height="1.1" fill="#4f8fd6"/><rect x="2" y="6.8" width="12" height="1.5" fill="#2a62ac"/><rect x="2" y="8.3" width="12" height="1.1" fill="#4f8fd6"/><rect x="2" y="10.6" width="12" height="1.5" fill="#2a62ac"/><rect x="2" y="12.1" width="12" height="1.1" fill="#4f8fd6"/></svg>
<span class="t" id="t27" style="left:134px;top:340.25px;line-height:24px;font-size:17px;color:#202020;letter-spacing:-0.030px;width:343px;overflow:hidden;">esp_system_abort() at esp_system.c:123 0x4038523c</span>
<svg style="left:102.0px;top:366.5px" width="24" height="24" viewBox="0 0 16 16"><rect x="2" y="3" width="12" height="1.5" fill="#2a62ac"/><rect x="2" y="4.5" width="12" height="1.1" fill="#4f8fd6"/><rect x="2" y="6.8" width="12" height="1.5" fill="#2a62ac"/><rect x="2" y="8.3" width="12" height="1.1" fill="#4f8fd6"/><rect x="2" y="10.6" width="12" height="1.5" fill="#2a62ac"/><rect x="2" y="12.1" width="12" height="1.1" fill="#4f8fd6"/></svg>
<span class="t" id="t28" style="left:134px;top:367.25px;line-height:24px;font-size:17px;color:#202020;letter-spacing:-0.146px;">__assert_func() at assert.c:85 0x40388bfa</span>
<svg style="left:102.0px;top:393.5px" width="24" height="24" viewBox="0 0 16 16"><rect x="2" y="3" width="12" height="1.5" fill="#2a62ac"/><rect x="2" y="4.5" width="12" height="1.1" fill="#4f8fd6"/><rect x="2" y="6.8" width="12" height="1.5" fill="#2a62ac"/><rect x="2" y="8.3" width="12" height="1.1" fill="#4f8fd6"/><rect x="2" y="10.6" width="12" height="1.5" fill="#2a62ac"/><rect x="2" y="12.1" width="12" height="1.1" fill="#4f8fd6"/></svg>
<span class="t" id="t29" style="left:134px;top:394.25px;line-height:24px;font-size:17px;color:#202020;letter-spacing:0.278px;width:343px;overflow:hidden;">app_main() at hello_world_main.c:45 0x42006a5e</span>
<svg style="left:102.0px;top:420.5px" width="24" height="24" viewBox="0 0 16 16"><rect x="2" y="3" width="12" height="1.5" fill="#2a62ac"/><rect x="2" y="4.5" width="12" height="1.1" fill="#4f8fd6"/><rect x="2" y="6.8" width="12" height="1.5" fill="#2a62ac"/><rect x="2" y="8.3" width="12" height="1.1" fill="#4f8fd6"/><rect x="2" y="10.6" width="12" height="1.5" fill="#2a62ac"/><rect x="2" y="12.1" width="12" height="1.1" fill="#4f8fd6"/></svg>
<span class="t" id="t30" style="left:134px;top:421.25px;line-height:24px;font-size:17px;color:#202020;letter-spacing:0.338px;width:343px;overflow:hidden;">main_task() at port_common.c:127 0x42013c4a</span>
<svg style="left:102.0px;top:447.5px" width="24" height="24" viewBox="0 0 16 16"><rect x="2" y="3" width="12" height="1.5" fill="#2a62ac"/><rect x="2" y="4.5" width="12" height="1.1" fill="#4f8fd6"/><rect x="2" y="6.8" width="12" height="1.5" fill="#2a62ac"/><rect x="2" y="8.3" width="12" height="1.1" fill="#4f8fd6"/><rect x="2" y="10.6" width="12" height="1.5" fill="#2a62ac"/><rect x="2" y="12.1" width="12" height="1.1" fill="#4f8fd6"/></svg>
<span class="t" id="t31" style="left:134px;top:448.25px;line-height:24px;font-size:17px;color:#202020;letter-spacing:0.272px;width:343px;overflow:hidden;">vPortSetInterruptMask() at port.c:327 0x40385d3c</span>
<svg style="left:59.5px;top:480.3px" width="12" height="16" viewBox="0 0 12 16"><path d="M2.5 2.5 L8 8 L2.5 13.5" fill="none" stroke="#9a9a9a" stroke-width="2.4"/></svg>
<svg style="left:78.0px;top:474.5px" width="24" height="24" viewBox="0 0 16 16"><rect x="1.6" y="9.4" width="3.6" height="5.4" fill="#f0c84a" stroke="#a8821a" stroke-width=".8"/><rect x="5.8" y="9.4" width="3.6" height="5.4" fill="#f0c84a" stroke="#a8821a" stroke-width=".8"/><rect x="9.6" y="2.6" width="1.8" height="2" fill="#b87a1c" transform="rotate(0 10.5 6.6)"/><rect x="9.6" y="2.6" width="1.8" height="2" fill="#b87a1c" transform="rotate(45 10.5 6.6)"/><rect x="9.6" y="2.6" width="1.8" height="2" fill="#b87a1c" transform="rotate(90 10.5 6.6)"/><rect x="9.6" y="2.6" width="1.8" height="2" fill="#b87a1c" transform="rotate(135 10.5 6.6)"/><rect x="9.6" y="2.6" width="1.8" height="2" fill="#b87a1c" transform="rotate(180 10.5 6.6)"/><rect x="9.6" y="2.6" width="1.8" height="2" fill="#b87a1c" transform="rotate(225 10.5 6.6)"/><rect x="9.6" y="2.6" width="1.8" height="2" fill="#b87a1c" transform="rotate(270 10.5 6.6)"/><rect x="9.6" y="2.6" width="1.8" height="2" fill="#b87a1c" transform="rotate(315 10.5 6.6)"/><circle cx="10.5" cy="6.6" r="3" fill="#e8aa3c" stroke="#a06c14" stroke-width=".8"/><circle cx="10.5" cy="6.6" r="1.1" fill="#fff3d0" stroke="#a06c14" stroke-width=".5"/></svg>
<span class="t" id="t32" style="left:111px;top:475.25px;line-height:24px;font-size:17px;color:#202020;letter-spacing:-0.090px;width:366px;overflow:hidden;">Thread #2 2 (Name: IDLE State: Suspended) (Suspended : Container)</span>
<svg style="left:59.5px;top:507.3px" width="12" height="16" viewBox="0 0 12 16"><path d="M2.5 2.5 L8 8 L2.5 13.5" fill="none" stroke="#9a9a9a" stroke-width="2.4"/></svg>
<svg style="left:78.0px;top:501.5px" width="24" height="24" viewBox="0 0 16 16"><rect x="1.6" y="9.4" width="3.6" height="5.4" fill="#f0c84a" stroke="#a8821a" stroke-width=".8"/><rect x="5.8" y="9.4" width="3.6" height="5.4" fill="#f0c84a" stroke="#a8821a" stroke-width=".8"/><rect x="9.6" y="2.6" width="1.8" height="2" fill="#b87a1c" transform="rotate(0 10.5 6.6)"/><rect x="9.6" y="2.6" width="1.8" height="2" fill="#b87a1c" transform="rotate(45 10.5 6.6)"/><rect x="9.6" y="2.6" width="1.8" height="2" fill="#b87a1c" transform="rotate(90 10.5 6.6)"/><rect x="9.6" y="2.6" width="1.8" height="2" fill="#b87a1c" transform="rotate(135 10.5 6.6)"/><rect x="9.6" y="2.6" width="1.8" height="2" fill="#b87a1c" transform="rotate(180 10.5 6.6)"/><rect x="9.6" y="2.6" width="1.8" height="2" fill="#b87a1c" transform="rotate(225 10.5 6.6)"/><rect x="9.6" y="2.6" width="1.8" height="2" fill="#b87a1c" transform="rotate(270 10.5 6.6)"/><rect x="9.6" y="2.6" width="1.8" height="2" fill="#b87a1c" transform="rotate(315 10.5 6.6)"/><circle cx="10.5" cy="6.6" r="3" fill="#e8aa3c" stroke="#a06c14" stroke-width=".8"/><circle cx="10.5" cy="6.6" r="1.1" fill="#fff3d0" stroke="#a06c14" stroke-width=".5"/></svg>
<span class="t" id="t33" style="left:111px;top:502.25px;line-height:24px;font-size:17px;color:#202020;letter-spacing:0.003px;width:366px;overflow:hidden;">Thread #3 3 (Name: esp_timer State: Suspended) (Suspended : Container)</span>
<svg style="left:54.0px;top:528.5px" width="24" height="24" viewBox="0 0 16 16"><rect x="5.4" y="1.4" width="7.6" height="12.6" rx=".8" fill="#c9cdd2" stroke="#8a8f96" stroke-width=".9"/><rect x="6.8" y="3" width="4.8" height="1.6" fill="#f4f4f4"/><rect x="6.8" y="6" width="4.8" height="1.2" fill="#9aa0a8"/><path d="M1 9.6 L6 12.4 L1 15.2 Z" fill="#4ab04a" stroke="#2a8a2a" stroke-width=".6"/></svg>
<span class="t" id="t34" style="left:86px;top:529.25px;line-height:24px;font-size:17px;color:#202020;letter-spacing:0.714px;width:391px;overflow:hidden;">C:\Users\aliaz\.espressif\tools\riscv32-esp-elf\esp-2021r2-patch3-8.4.0\riscv32-esp-elf\bin\riscv32-esp-elf-gdb.exe</span>
<div style="left:1px;top:944px;width:476px;height:24px;background:#f0f0f0;"></div>
<div style="left:27.5px;top:954.5px;width:94px;height:3px;background:#8a8a8a;"></div>
<div style="left:485px;top:158.5px;width:928px;height:445.5px;background:#f0f0f0;border:1px solid #dadada;box-sizing:border-box;"></div>
<div style="left:486px;top:159.5px;width:926px;height:36.5px;background:#f3f3f3;"></div>
<svg style="left:495.0px;top:169.0px" width="20" height="20" viewBox="0 0 16 16"><rect x="1.4" y="2" width="5.4" height="5.4" fill="#8cc4f6"/><rect x="1.8" y="9.4" width="4.8" height="4.8" fill="#fafcff" stroke="#d8a878" stroke-width=".9"/><rect x="8.8" y="8.8" width="5.8" height="5.8" fill="#3a80b8"/><path d="M11.6 1.4 L14.4 4.4 L11.6 7.4 L8.8 4.4 Z" fill="#fdfdfd" stroke="#d8a878" stroke-width=".9"/></svg>
<span class="t" id="t35" style="left:523px;top:167.75px;line-height:24px;font-size:17px;color:#303030;letter-spacing:0.305px;-webkit-text-stroke:0.2px;">SDK Configuration</span>
<svg style="left:714.5px;top:167.0px" width="24" height="24" viewBox="0 0 16 16"><path d="M3 2 H10.4 L13.4 5 V14.6 H3 Z" fill="#eef4fc" stroke="#c0ae80" stroke-width="1"/><path d="M10.4 2 V5 H13.4" fill="none" stroke="#c0ae80" stroke-width=".8"/><text x="8.4" y="12.8" font-family="Liberation Sans, sans-serif" font-size="10" font-weight="700" text-anchor="middle" fill="#2a60b0" letter-spacing="-.4">.c</text></svg>
<span class="t" id="t36" style="left:744px;top:167.75px;line-height:24px;font-size:17px;color:#303030;letter-spacing:0.332px;-webkit-text-stroke:0.2px;">hello_world_main.c</span>
<div style="left:934px;top:159.5px;width:131px;height:37.5px;background:#fff;"></div>
<svg style="left:939.0px;top:167.0px" width="24" height="24" viewBox="0 0 16 16"><path d="M3 3.4 H10.4 L13.4 5 V14.6 H3 Z" fill="#eef4fc" stroke="#c0ae80" stroke-width="1"/><text x="8.4" y="12.8" font-family="Liberation Sans, sans-serif" font-size="10" font-weight="700" text-anchor="middle" fill="#2a60b0" letter-spacing="-.4">.c</text><path d="M.4 5.6 V1 H3.8 L4.8 2.2 H9.8 V3.6 H3.4 L2.4 5.6 Z" fill="#f2d078" stroke="#b8902a" stroke-width=".7"/></svg>
<span class="t" id="t37" style="left:970px;top:167.75px;line-height:24px;font-size:17px;color:#2a2a2a;letter-spacing:0.304px;-webkit-text-stroke:0.2px;">panic.c</span>
<svg style="left:1038.0px;top:171.5px" width="16" height="16" viewBox="0 0 16 16"><path d="M2.0 2.0 L14.0 14.0 M14.0 2.0 L2.0 14.0" stroke="#444" stroke-width="1.5" fill="none"/></svg>
<div style="left:1347.0px;top:170px;width:12px;height:3px;border:1.5px solid #747474;background:#fff;border-radius:.5px"></div>
<div style="left:1381.5px;top:170.0px;width:12px;height:11.5px;border:1.5px solid #747474;background:#fff;border-radius:.5px"></div>
<div style="left:1382px;top:172.7px;width:14px;height:1.2px;background:#747474"></div>
<div style="left:486px;top:197px;width:926px;height:383px;background:#fff;"></div>
<div style="left:486px;top:197px;width:17.5px;height:383px;background:#f7f7f7;"></div>
<div style="left:503.5px;top:197px;width:49.5px;height:383px;background:#ffffff;"></div>
<div style="left:1367px;top:197px;width:45px;height:406px;background:linear-gradient(to right,#fafafa,#f6f6f6 40%,#efefef)"></div>
<div style="left:553px;top:197.5px;width:814px;height:44.4px;background:#e0e0e0;"></div>
<div style="left:553px;top:265px;width:814px;height:22px;background:#c5ddb0;"></div>
<div style="left:553.3px;top:265.3px;width:2.8px;height:21.5px;background:#2a1048;"></div>
<svg style="left:485.3px;top:269.6px" width="11.5" height="13.6" viewBox="0 0 14 17"><path d="M1 5.4 H6.4 V1.6 L12.6 8.5 L6.4 15.4 V11.6 H1 Z" fill="#4a88d8" stroke="#2c5ea8" stroke-width="1"/></svg>
<pre style="left:553px;top:198.75px;width:813.5px;height:378.5px;line-height:22.5px;font-size:17.5px;color:#000;"><b style="color:#7f0055">#endif</b>
<b style="color:#7f0055">#endif</b>

    *((<b style="color:#7f0055">volatile</b> <b style="color:#7f0055">int</b> *) 0) = 0; <span style="color:#4a8868;-webkit-text-stroke:0">// NOLINT(clang-analyzer-core.NullDereference)</span>
    <b style="color:#7f0055">while</b> (1);
}

<span style="color:#4a8868;-webkit-text-stroke:0">/* Weak versions of reset reason hint functions.</span>
<span style="color:#4a8868;-webkit-text-stroke:0"> * If these weren't provided, reset reason code would be linked into the app</span>
<span style="color:#4a8868;-webkit-text-stroke:0"> * even if the app never called esp_reset_reason().</span>
<span style="color:#4a8868;-webkit-text-stroke:0"> */</span>
<b style="color:#7f0055">void</b> IRAM_ATTR <b style="color:#7f0055">__attribute__</b>((weak)) esp_reset_reason_set_hint(esp_reset_reason_t hint)
{
}

esp_reset_reason_t IRAM_ATTR  <b style="color:#7f0055">__attribute__</b>((weak)) esp_reset_reason_get_hint(void)
{</pre>
<pre style="left:503.5px;top:198.75px;width:40px;height:378.5px;line-height:22.5px;font-size:17.5px;color:#7e7e7e;-webkit-text-stroke:0;">400
401
402
403
404
405
406
407
408
409
410
411
412
413
414
415
416</pre>
<svg style="left:534.8px;top:358.4px" width="15" height="15" viewBox="0 0 15 15"><circle cx="7.5" cy="7.5" r="6" fill="#e6ebf3" stroke="#c4ccd8" stroke-width="1"/><path d="M4.4 7.5 H10.6" stroke="#566880" stroke-width="1.7"/></svg>
<svg style="left:534.8px;top:538.5px" width="15" height="15" viewBox="0 0 15 15"><circle cx="7.5" cy="7.5" r="6" fill="#e6ebf3" stroke="#c4ccd8" stroke-width="1"/><path d="M4.4 7.5 H10.6" stroke="#566880" stroke-width="1.7"/></svg>
<div style="left:1380px;top:525px;width:1.5px;height:24px;background:#6a6a6a;"></div>
<div style="left:1395.5px;top:536px;width:13px;height:5px;background:#f6faf0;border:1px solid #cfe0b8;box-sizing:border-box;"></div>
<div style="left:486px;top:580px;width:67px;height:23px;background:#f5f5f5;"></div>
<div style="left:553px;top:580px;width:814px;height:23px;background:#f0f0f0;"></div>
<div style="left:576px;top:590px;width:496px;height:3px;background:#8a8a8a;"></div>
<div style="left:1419px;top:158.5px;width:502px;height:445.5px;background:#f0f0f0;border:1px solid #dadada;box-sizing:border-box;"></div>
<div style="left:1420px;top:159.5px;width:500px;height:36.5px;background:#e9e9e9;"></div>
<div style="left:1551px;top:159.5px;width:94px;height:36.5px;background:#f4f4f4;"></div>
<svg style="left:1425px;top:167px" width="26" height="24" viewBox="-1 0 18 16"><text x="8" y="11.4" font-family="Liberation Sans, sans-serif" font-size="9" text-anchor="middle" fill="#3a86d0">(x)=</text></svg>
<span class="t" id="t38" style="left:1456px;top:167.75px;line-height:24px;font-size:17px;color:#333;letter-spacing:0.141px;-webkit-text-stroke:0.2px;">V</span>
<svg style="left:1492.0px;top:167.0px" width="24" height="24" viewBox="0 0 16 16"><circle cx="4.6" cy="5" r="3" fill="#5b9ad8" stroke="#2e6eb8" stroke-width=".8"/><circle cx="10.8" cy="10.4" r="3.4" fill="#5b9ad8" stroke="#2e6eb8" stroke-width=".8"/></svg>
<span class="t" id="t39" style="left:1522px;top:167.75px;line-height:24px;font-size:17px;color:#333;letter-spacing:0.141px;-webkit-text-stroke:0.2px;">B</span>
<svg style="left:1556.0px;top:166.0px" width="24" height="24" viewBox="0 0 16 16"><circle cx="3.6" cy="6.6" r="2.2" fill="none" stroke="#2e7eb8" stroke-width="1.1"/><circle cx="9" cy="6.6" r="2.2" fill="none" stroke="#2e7eb8" stroke-width="1.1"/><path d="M1.6 4.6 L4 1.6 M11 4.8 Q12 1.4 15 2" fill="none" stroke="#2e7eb8" stroke-width="1.1"/><path d="M6 11 L8.6 13.6 M8.6 11 L6 13.6 M10.4 11.4 H13.6 M10.4 13.4 H13.6" stroke="#2e7eb8" stroke-width="1"/></svg>
<span class="t" id="t40" style="left:1585.5px;top:167.75px;line-height:24px;font-size:17px;color:#202020;letter-spacing:0.141px;">E</span>
<svg style="left:1618.5px;top:172.0px" width="16" height="16" viewBox="0 0 16 16"><path d="M2.0 2.0 L14.0 14.0 M14.0 2.0 L2.0 14.0" stroke="#444" stroke-width="1.5" fill="none"/></svg>
<svg style="left:1650.0px;top:167.0px" width="24" height="24" viewBox="0 0 16 16"><rect x="1.4" y="10.6" width="9.6" height="3.4" fill="#c05030" stroke="#803018" stroke-width=".6"/><rect x="2" y="7.2" width="8.6" height="3.2" fill="#3a9a4a" stroke="#1f6a2a" stroke-width=".6"/><rect x="2.6" y="4" width="7.4" height="3" fill="#3a6cc0" stroke="#20408a" stroke-width=".6"/><path d="M11 2 L13 1.4 L15.4 13.6 L13 14.2 Z" fill="#e8a838" stroke="#a87018" stroke-width=".6"/></svg>
<span class="t" id="t41" style="left:1680.5px;top:167.75px;line-height:24px;font-size:17px;color:#333;letter-spacing:0.141px;-webkit-text-stroke:0.2px;">M</span>
<svg style="left:1721.0px;top:167.0px" width="24" height="24" viewBox="0 0 16 16"><rect x="4.4" y="1.4" width="7.2" height="4.6" fill="#eaf0fb" stroke="#5a78b8" stroke-width="1"/><path d="M8 6 V9 M3.6 11 V9 H12.4 V11" fill="none" stroke="#5a78b8" stroke-width="1"/><rect x="1.6" y="11" width="4" height="3.6" fill="#f6d658" stroke="#b8921a" stroke-width=".8"/><rect x="10.4" y="11" width="4" height="3.6" fill="#f6d658" stroke="#b8921a" stroke-width=".8"/></svg>
<span class="t" id="t42" style="left:1751.5px;top:167.75px;line-height:24px;font-size:17px;color:#333;letter-spacing:0.141px;-webkit-text-stroke:0.2px;">P</span>
<div style="left:1786px;top:175px;width:8px;height:8px;background:#ee1111;"></div>
<span class="t" id="t43" style="left:1800.5px;top:167.75px;line-height:24px;font-size:17px;color:#333;letter-spacing:0.141px;-webkit-text-stroke:0.2px;">P</span>
<div style="left:1854.0px;top:170px;width:12px;height:3px;border:1.5px solid #747474;background:#fff;border-radius:.5px"></div>
<div style="left:1888.5px;top:170.0px;width:12px;height:11.5px;border:1.5px solid #747474;background:#fff;border-radius:.5px"></div>
<div style="left:1889px;top:172.7px;width:14px;height:1.2px;background:#747474"></div>
<svg style="left:1588.0px;top:202.0px" width="24" height="24" viewBox="0 0 16 16"><text x="5" y="9" font-family="Liberation Serif, serif" font-size="10" font-style="italic" text-anchor="middle" fill="#b8b8b8">x</text><rect x="2" y="9.4" width="12" height="5" rx=".8" fill="#f4f4f4" stroke="#c0c0c0" stroke-width=".8"/><path d="M4 12.6 H5 M6.4 12.6 H7.4 M8.8 12.6 H9.8" stroke="#c0c0c0" stroke-width="1"/></svg>
<div style="left:1619px;top:198px;width:33.5px;height:30px;background:#cce4f7;border:1px solid #a6d0f4;border-radius:3px;box-sizing:border-box;"></div>
<svg style="left:1624.0px;top:202.0px" width="24" height="24" viewBox="0 0 16 16"><path d="M1 6.4 H5 V4.4 L8.4 7.4 L5 10.4 V8.4 H1 Z" fill="#fdf0b0" stroke="#c8a030" stroke-width=".8"/><path d="M10.4 1.4 L12.4 4 H8.4 Z" fill="#3a6cc0"/><path d="M10.4 4 V13.4 M10.4 6.6 H13 M10.4 9.8 H13 M10.4 13 H13" stroke="#5a78b8" stroke-width=".9" fill="none"/><rect x="12.6" y="5.4" width="2.2" height="2.2" fill="#fff" stroke="#e04040" stroke-width=".7"/><rect x="12.6" y="8.6" width="2.2" height="2.2" fill="#fff" stroke="#e04040" stroke-width=".7"/><rect x="12.6" y="11.8" width="2.2" height="2.2" fill="#fff" stroke="#e04040" stroke-width=".7"/></svg>
<svg style="left:1658.0px;top:202.0px" width="24" height="24" viewBox="0 0 16 16"><rect x="1.6" y="1.6" width="9.6" height="9.6" fill="#f4f8fd" stroke="#a9bddb" stroke-width="1"/><rect x="4.6" y="4.6" width="9.8" height="9.8" fill="#f4f8fd" stroke="#6f93c8" stroke-width="1.1"/><path d="M6.6 9.5 H12.4" stroke="#2e5ea8" stroke-width="1.5"/></svg>
<div style="left:1691px;top:201px;width:1.5px;height:26px;background:#8c8c8c"></div>
<svg style="left:1703.0px;top:202.0px" width="24" height="24" viewBox="0 0 16 16"><path d="M6 1.6 H10 V6 H14.4 V10 H10 V14.4 H6 V10 H1.6 V6 H6 Z" fill="#9fd04a" stroke="#5e9a1c" stroke-width="1"/><path d="M7 2.6 H9 V7 H13.4" fill="none" stroke="#d6efa0" stroke-width=".9"/></svg>
<svg style="left:1739.0px;top:202.0px" width="24" height="24" viewBox="0 0 16 16"><path d="M3.4 3.4 L12.6 12.6 M12.6 3.4 L3.4 12.6" stroke="#ababab" stroke-width="3.6"/></svg>
<svg style="left:1774.0px;top:202.0px" width="24" height="24" viewBox="0 0 16 16"><path d="M2 1.8 L8.4 8.2 M8.4 1.8 L2 8.2" stroke="#d6d6d6" stroke-width="2.6"/><path d="M5.6 5.6 L13.6 13.6 M13.6 5.6 L5.6 13.6" stroke="#ababab" stroke-width="3.2"/></svg>
<div style="left:1806px;top:201px;width:1.5px;height:26px;background:#8c8c8c"></div>
<svg style="left:1820.0px;top:202.0px" width="24" height="24" viewBox="0 0 16 16"><rect x="1.6" y="4.4" width="11" height="10" fill="#f3f7fd" stroke="#d4b45c" stroke-width="1"/><rect x="1.6" y="4" width="11" height="2.4" fill="#4a8ed6"/><path d="M12.4 .4 Q12.8 3 15.4 3.6 Q12.8 4.2 12.4 6.8 Q12 4.2 9.4 3.6 Q12 3 12.4 .4 Z" fill="#fffbe0" stroke="#d8a824" stroke-width=".9"/></svg>
<svg style="left:1855.0px;top:202.0px" width="24" height="24" viewBox="0 0 16 16"><rect x="1.6" y="6" width="10.4" height="8" fill="#f3f7fd" stroke="#7aa0d8" stroke-width="1"/><rect x="1.6" y="5.6" width="10.4" height="2.2" fill="#4a8ed6"/><path d="M7.4 10.6 L10.4 7" stroke="#3a5a9a" stroke-width="1"/><path d="M10 4.4 L13.4 1.6 L15 4.6 L12 7 Z" fill="#a8a8a8" stroke="#787878" stroke-width=".7"/></svg>
<svg style="left:1889.0px;top:202.0px" width="24" height="24" viewBox="0 0 16 16"><circle cx="8" cy="3" r="1.6" fill="#fff" stroke="#707070" stroke-width="1"/><circle cx="8" cy="8" r="1.6" fill="#fff" stroke="#707070" stroke-width="1"/><circle cx="8" cy="13" r="1.6" fill="#fff" stroke="#707070" stroke-width="1"/></svg>
<div style="left:1420px;top:231px;width:500px;height:250.5px;background:#fff;"></div>
<div style="left:1420px;top:292px;width:500px;height:1.2px;background:#e3e3e3;"></div>
<div style="left:1420px;top:319px;width:500px;height:1.2px;background:#e3e3e3;"></div>
<div style="left:1420px;top:346px;width:500px;height:1.2px;background:#e3e3e3;"></div>
<div style="left:1420px;top:373px;width:500px;height:1.2px;background:#e3e3e3;"></div>
<div style="left:1420px;top:400px;width:500px;height:1.2px;background:#e3e3e3;"></div>
<div style="left:1420px;top:427px;width:500px;height:1.2px;background:#e3e3e3;"></div>
<div style="left:1420px;top:454px;width:500px;height:1.2px;background:#e3e3e3;"></div>
<div style="left:1420px;top:481px;width:500px;height:1.2px;background:#e3e3e3;"></div>
<div style="left:1584px;top:231px;width:1.2px;height:251px;background:#e3e3e3;"></div>
<div style="left:1749px;top:231px;width:1.2px;height:251px;background:#e3e3e3;"></div>
<div style="left:1913.5px;top:231px;width:1.2px;height:251px;background:#e3e3e3;"></div>
<span class="t" id="t44" style="left:1430px;top:236.75px;line-height:24px;font-size:17px;color:#202020;letter-spacing:-0.111px;">Expression</span>
<span class="t" id="t45" style="left:1595px;top:236.75px;line-height:24px;font-size:17px;color:#202020;letter-spacing:-0.340px;">Type</span>
<span class="t" id="t46" style="left:1760px;top:236.75px;line-height:24px;font-size:17px;color:#202020;letter-spacing:-0.044px;">Value</span>
<svg style="left:1449.0px;top:269.0px" width="22" height="22" viewBox="0 0 16 16"><path d="M6 1.6 H10 V6 H14.4 V10 H10 V14.4 H6 V10 H1.6 V6 H6 Z" fill="#9fd04a" stroke="#5e9a1c" stroke-width="1"/></svg>
<span class="t" id="t47" style="left:1480px;top:268.25px;line-height:24px;font-size:17px;color:#202020;font-style:italic;letter-spacing:0.450px;width:103.5px;overflow:hidden;">Add new expression</span>
<div style="left:1420px;top:489.5px;width:474.5px;height:90.5px;background:#fff;border-radius:3px;"></div>
<svg style="left:1896px;top:493px" width="20" height="20" viewBox="-10 -10 20 20"><polygon points="-6.2,3.4100000000000006 0,-3.4100000000000006 6.2,3.4100000000000006" fill="#a6a6a6"/></svg>
<svg style="left:1896px;top:556px" width="20" height="20" viewBox="-10 -10 20 20"><polygon points="-6.2,-3.4100000000000006 0,3.4100000000000006 6.2,-3.4100000000000006" fill="#a6a6a6"/></svg>
<svg style="left:1422.5px;top:581.5px" width="20" height="20" viewBox="-10 -10 20 20"><polygon points="3.4100000000000006,-6.2 -3.4100000000000006,0 3.4100000000000006,6.2" fill="#a6a6a6"/></svg>
<svg style="left:1871px;top:581.5px" width="20" height="20" viewBox="-10 -10 20 20"><polygon points="-3.4100000000000006,-6.2 3.4100000000000006,0 -3.4100000000000006,6.2" fill="#a6a6a6"/></svg>
<div style="left:485px;top:612px;width:1436px;height:357.5px;background:#f0f0f0;border:1px solid #dadada;box-sizing:border-box;"></div>
<div style="left:486px;top:613px;width:1434px;height:36.5px;background:#e9e9e9;"></div>
<div style="left:486px;top:613px;width:139.5px;height:36.5px;background:#f4f4f4;"></div>
<svg style="left:492.5px;top:620.0px" width="24" height="24" viewBox="0 0 16 16"><rect x="1.6" y="2" width="12.8" height="9.4" rx="1.2" fill="#3a6cc0" stroke="#27509a" stroke-width="1"/><rect x="3.4" y="3.8" width="9.2" height="5.8" fill="#e8f0fb"/><path d="M4.6 5.6 H10.6 M4.6 7.6 H9" stroke="#3a6cc0" stroke-width="1"/><rect x="5" y="12.2" width="6" height="1.8" fill="#27509a"/></svg>
<span class="t" id="t48" style="left:521px;top:620.75px;line-height:24px;font-size:17px;color:#222;letter-spacing:0.304px;-webkit-text-stroke:0.3px;">Console</span>
<svg style="left:632.0px;top:620.0px" width="24" height="24" viewBox="0 0 16 16"><text x="8" y="7.4" font-family="Liberation Mono, monospace" font-size="6.8" font-weight="700" text-anchor="middle" fill="#4a8cc8">1010</text><text x="8" y="14" font-family="Liberation Mono, monospace" font-size="6.8" font-weight="700" text-anchor="middle" fill="#4a8cc8">0101</text></svg>
<span class="t" id="t49" style="left:662px;top:620.75px;line-height:24px;font-size:17px;color:#333;letter-spacing:-0.368px;-webkit-text-stroke:0.2px;">Registers</span>
<svg style="left:747.0px;top:620.0px" width="24" height="24" viewBox="0 0 16 16"><rect x="1.4" y="4.6" width="10" height="3.6" fill="#7ab87a" stroke="#4a8a4a" stroke-width=".8"/><rect x="8" y="4.6" width="5" height="3.6" fill="#e8e8e8" stroke="#8a8a8a" stroke-width=".8"/><circle cx="10.4" cy="11.4" r="3.4" fill="#3aa83a" stroke="#1f7a1f" stroke-width=".7"/><path d="M9.4 9.6 L12.2 11.4 L9.4 13.2 Z" fill="#fff"/></svg>
<span class="t" id="t50" style="left:777px;top:620.75px;line-height:24px;font-size:17px;color:#333;letter-spacing:-0.254px;-webkit-text-stroke:0.2px;">Progress</span>
<svg style="left:858.0px;top:620.0px" width="24" height="24" viewBox="0 0 16 16"><rect x="1.6" y="1.6" width="11.4" height="12.8" fill="#f6f6f0" stroke="#a8a8a0" stroke-width=".9"/><circle cx="7.2" cy="5" r="2.4" fill="#e03030"/><path d="M3.6 13.6 Q3.6 8.4 7.2 8.4 Q10.8 8.4 10.8 13.6 Z" fill="#f0b048"/><path d="M13.4 3 V7 M13.4 8.4 V9.4" stroke="#e8a020" stroke-width="1.3"/></svg>
<span class="t" id="t51" style="left:889.5px;top:620.75px;line-height:24px;font-size:17px;color:#333;letter-spacing:0.211px;-webkit-text-stroke:0.2px;">Problems</span>
<svg style="left:978.5px;top:620.0px" width="24" height="24" viewBox="0 0 16 16"><circle cx="8" cy="8" r="6.4" fill="#6a88d8" stroke="#3a58a8" stroke-width="1"/><path d="M6 4 L12 8 L6 12 Z" fill="#eef2fc"/></svg>
<span class="t" id="t52" style="left:1009.5px;top:620.75px;line-height:24px;font-size:17px;color:#333;letter-spacing:-0.102px;-webkit-text-stroke:0.2px;">Executables</span>
<svg style="left:1117.5px;top:620.0px" width="24" height="24" viewBox="0 0 16 16"><path d="M3 2.6 H13 V14.4 H3 Z" fill="#fdfdf4" stroke="#8a8a78" stroke-width="1"/><path d="M4.6 1.2 V3.4 M6.8 1.2 V3.4 M9 1.2 V3.4 M11.2 1.2 V3.4" stroke="#555" stroke-width=".9"/><text x="8" y="12.2" font-family="Liberation Sans, sans-serif" font-size="8" font-weight="700" text-anchor="middle" fill="#2c58a6">J</text><path d="M3 14.4 H13" stroke="#6a9a3a" stroke-width="1.4"/></svg>
<span class="t" id="t53" style="left:1147px;top:620.75px;line-height:24px;font-size:17px;color:#333;letter-spacing:0.080px;-webkit-text-stroke:0.2px;">Debug Shell</span>
<svg style="left:1256.5px;top:620.0px" width="24" height="24" viewBox="0 0 16 16"><rect x="1.4" y="1.6" width="12" height="9.4" rx="1" fill="#3a6cc0" stroke="#27509a" stroke-width="1"/><rect x="3" y="3.2" width="8.8" height="6" fill="#e8f0fb"/><rect x="4.6" y="11.6" width="5" height="1.8" fill="#27509a"/><path d="M5 5 L9 9 M9 5 L5 9" stroke="#444" stroke-width="1"/><ellipse cx="11.4" cy="11.6" rx="3" ry="3.4" fill="#7cc0a0" stroke="#2f8f6f" stroke-width=".8"/></svg>
<span class="t" id="t54" style="left:1285.5px;top:620.75px;line-height:24px;font-size:17px;color:#333;letter-spacing:0.233px;-webkit-text-stroke:0.2px;">Debugger Console</span>
<svg style="left:1447.5px;top:620.0px" width="24" height="24" viewBox="0 0 16 16"><rect x="5" y="1.6" width="9.6" height="7.6" rx="1" fill="#d8d8d8" stroke="#4a4a4a" stroke-width="1"/><rect x="6.4" y="3" width="6.8" height="4.6" fill="#1a3ac0"/><rect x="7" y="3.4" width="3" height="1.6" fill="#8ab0f8"/><path d="M9 9.4 L5 12.4 L2.6 14" stroke="#6a6a6a" stroke-width="1.2" fill="none"/><path d="M1.4 11.6 L4.6 10.4 L6 13 L2.6 14.8 Z" fill="#d8d8c8" stroke="#6a6a5a" stroke-width=".7"/></svg>
<span class="t" id="t55" style="left:1477.5px;top:620.75px;line-height:24px;font-size:17px;color:#333;letter-spacing:0.156px;-webkit-text-stroke:0.2px;">Terminal</span>
<svg style="left:1559.0px;top:620.0px" width="24" height="24" viewBox="0 0 16 16"><rect x="4" y="1.6" width="8" height="13" rx="3" fill="#9cc0f0" stroke="#3a6cc0" stroke-width="1.1"/><rect x="5.6" y="3" width="2" height="10" rx="1" fill="#e0ecfc"/></svg>
<span class="t" id="t56" style="left:1589px;top:620.75px;line-height:24px;font-size:17px;color:#333;letter-spacing:0.682px;-webkit-text-stroke:0.2px;">Memory</span>
<svg style="left:598.5px;top:625.0px" width="16" height="16" viewBox="0 0 16 16"><path d="M2.0 2.0 L14.0 14.0 M14.0 2.0 L2.0 14.0" stroke="#444" stroke-width="1.5" fill="none"/></svg>
<div style="left:1853.5px;top:623px;width:12px;height:3px;border:1.5px solid #747474;background:#fff;border-radius:.5px"></div>
<div style="left:1888.5px;top:623.0px;width:12px;height:11.5px;border:1.5px solid #747474;background:#fff;border-radius:.5px"></div>
<div style="left:1889px;top:625.7px;width:14px;height:1.2px;background:#747474"></div>
<div style="left:1656px;top:650px;width:264px;height:33px;background:#f3f3f3;"></div>
<svg style="left:1659.0px;top:655.0px" width="24" height="24" viewBox="0 0 16 16"><path d="M2 1.4 H8.6 L11.4 4.2 V13 H2 Z" fill="#fbfbf6" stroke="#c8b890" stroke-width=".9"/><path d="M3.6 4.4 H8 M3.6 6.2 H9.6 M3.6 8 H9.6 M3.6 9.8 H8.6 M3.6 11.4 H7.4" stroke="#5a8ad0" stroke-width=".9"/><path d="M9.4 10 L14.4 15 M14.4 10 L9.4 15" stroke="#8e8e8e" stroke-width="2"/></svg>
<svg style="left:1694.0px;top:655.0px" width="24" height="24" viewBox="0 0 16 16"><rect x="4.4" y="1.6" width="10.2" height="11.6" fill="#f6f9fd" stroke="#b8c4d8" stroke-width=".9"/><rect x="11.4" y="2.2" width="2.6" height="10.4" fill="#dbe6f6" stroke="#8aa6d0" stroke-width=".6"/><path d="M12.2 4 H13.2 M12.2 11 H13.2" stroke="#3a6ab8" stroke-width=".9"/><rect x="1.2" y="9" width="6.8" height="5.6" rx=".8" fill="#f0c450" stroke="#a87c14" stroke-width=".8"/><path d="M2.8 9 V7.4 Q2.8 5.4 4.6 5.4 Q6.4 5.4 6.4 7.4 V9" fill="none" stroke="#a87c14" stroke-width="1.2"/></svg>
<svg style="left:1728.5px;top:655.0px" width="24" height="24" viewBox="0 0 16 16"><path d="M1.8 1.4 H8.6 L11.2 4 V12.6 H1.8 Z" fill="#fbfbf6" stroke="#c8b890" stroke-width=".9"/><path d="M3.4 4.4 H8 M3.4 6.2 H8.4 M3.4 8 H7 M3.4 9.8 H6" stroke="#5a8ad0" stroke-width=".9"/><path d="M12.2 3.4 H14.6 V10.8 H9.8 V12.8 L6.4 9.8 L9.8 6.8 V8.6 H12.2 Z" fill="#f8d060" stroke="#c08a14" stroke-width=".8"/></svg>
<div style="left:1761px;top:654px;width:1.5px;height:26px;background:#8c8c8c"></div>
<svg style="left:1775.0px;top:655.0px" width="24" height="24" viewBox="0 0 16 16"><rect x="1.6" y="6" width="10.8" height="8" fill="#f3f7fd" stroke="#8aa6d0" stroke-width="1"/><rect x="1.6" y="5.6" width="10.8" height="2.2" fill="#4a8ed6"/><path d="M7.4 11.4 L10 8" stroke="#4a6a9a" stroke-width="1"/><circle cx="11.8" cy="4.4" r="2.8" fill="#2fa84a" stroke="#1f7a30" stroke-width=".7"/><circle cx="11" cy="3.6" r=".9" fill="#8fe0a0"/></svg>
<svg style="left:1810.5px;top:654.0px" width="24" height="24" viewBox="0 0 16 16"><rect x="1.6" y="2" width="12.8" height="9.4" rx="1.2" fill="#3a6cc0" stroke="#27509a" stroke-width="1"/><rect x="3.4" y="3.8" width="9.2" height="5.8" fill="#e8f0fb"/><path d="M4.6 5.6 H10.6 M4.6 7.6 H9" stroke="#3a6cc0" stroke-width="1"/><rect x="5" y="12.2" width="6" height="1.8" fill="#27509a"/></svg>
<svg style="left:1844px;top:664px" width="12" height="7" viewBox="0 0 12 7"><path d="M0.5 0.5 H11.5 L6 6.5 Z" fill="#222"/></svg>
<svg style="left:1867.5px;top:655.0px" width="24" height="24" viewBox="0 0 16 16"><rect x="1.5" y="4" width="11.5" height="10" fill="#f3f7fd" stroke="#c8b878" stroke-width="1"/><rect x="1.5" y="3.6" width="11.5" height="2.4" fill="#4a8ed6"/><path d="M12.4 .4 Q12.8 3 15.4 3.6 Q12.8 4.2 12.4 6.8 Q12 4.2 9.4 3.6 Q12 3 12.4 .4 Z" fill="#fffbe0" stroke="#d8a824" stroke-width=".9"/></svg>
<svg style="left:1901px;top:664px" width="12" height="7" viewBox="0 0 12 7"><path d="M0.5 0.5 H11.5 L6 6.5 Z" fill="#222"/></svg>
<span class="t" id="t57" style="left:485.5px;top:683.75px;line-height:24px;font-size:17px;color:#202020;letter-spacing:0.195px;">JSON Configuration Server Console</span>
<div style="left:486px;top:705.5px;width:1434px;height:1.5px;background:#a8a8a8;"></div>
<div style="left:486px;top:707px;width:1408px;height:237px;background:#fff;"></div>
<pre style="left:489px;top:710.75px;width:1404px;height:112.5px;line-height:22.5px;font-size:17.5px;color:#111;">Executing action: confserver
Running ninja in directory c:\users\aliaz\runtime-plugindevlaunch\hello_world\build
Executing "ninja confserver"...
[0/1] cmd.exe /C "cd /D C:\Users\aliaz\runtime-PluginDevLaunch\hello_world\build &amp;&amp; python C:/Users/aliaz/Documents/DevTools/ESP-IDF/master/esp-idf/tools/confserver.py --env-file config.env
Server running, waiting for requests on stdin...</pre>
<div style="left:1894px;top:707px;width:26px;height:237px;background:#f0f0f0;"></div>
<svg style="left:1896px;top:713px" width="20" height="20" viewBox="-10 -10 20 20"><polygon points="-6.2,3.4100000000000006 0,-3.4100000000000006 6.2,3.4100000000000006" fill="#a6a6a6"/></svg>
<svg style="left:1896px;top:921px" width="20" height="20" viewBox="-10 -10 20 20"><polygon points="-6.2,-3.4100000000000006 0,3.4100000000000006 6.2,-3.4100000000000006" fill="#a6a6a6"/></svg>
<div style="left:486px;top:944px;width:1434px;height:24px;background:#f0f0f0;"></div>
<div style="left:511.5px;top:954.5px;width:264px;height:3px;background:#8a8a8a;"></div>
<div style="left:683px;top:971px;width:1.2px;height:31px;background:#a0a0a0;"></div>
<div style="left:884px;top:971px;width:1.2px;height:31px;background:#a0a0a0;"></div>
<div style="left:1075.5px;top:971px;width:1.2px;height:31px;background:#a0a0a0;"></div>
<span class="t" id="t58" style="left:695px;top:974.75px;line-height:24px;font-size:17px;color:#202020;letter-spacing:0.494px;">Writable</span>
<span class="t" id="t59" style="left:895px;top:974.75px;line-height:24px;font-size:17px;color:#202020;letter-spacing:0.201px;">Smart Insert</span>
<span class="t" id="t60" style="left:1087.5px;top:974.75px;line-height:24px;font-size:17px;color:#202020;letter-spacing:-0.396px;">403 : 1 : 13334</span>
<div style="left:1264.5px;top:979.75px;width:2.5px;height:2.5px;background:#bdbdbd"></div>
<div style="left:1264.5px;top:985.75px;width:2.5px;height:2.5px;background:#bdbdbd"></div>
<div style="left:1264.5px;top:991.75px;width:2.5px;height:2.5px;background:#bdbdbd"></div>
<div style="left:1264.5px;top:997.75px;width:2.5px;height:2.5px;background:#bdbdbd"></div>
<div style="left:1270.5px;top:973.5px;width:219.5px;height:31px;background:#f5f5f5;"></div>
<div style="left:1464px;top:973.5px;width:1.3px;height:31px;background:#777;"></div>
<div style="left:1270.5px;top:973.5px;width:142px;height:31px;background:#a9a9a9;"></div>
<span class="t" id="t61" style="left:1314px;top:977.75px;line-height:24px;font-size:17px;color:#202020;letter-spacing:0.276px;">385M of 526M</span>
<svg style="left:1466.3px;top:978.5px" width="23" height="23" viewBox="0 0 16 16"><path d="M3.2 4.6 H12.8 L12 15 H4 Z" fill="#aac6ea" stroke="#5a8acc" stroke-width="1"/><path d="M2.2 4 H13.8 M6 2.4 H10" stroke="#5a8acc" stroke-width="1.2"/><path d="M6.3 5.4 V14.4 M9.7 5.4 V14.4" stroke="#5a8acc" stroke-width="1"/></svg>
<div style="left:1493.0px;top:979.75px;width:2.5px;height:2.5px;background:#bdbdbd"></div>
<div style="left:1493.0px;top:985.75px;width:2.5px;height:2.5px;background:#bdbdbd"></div>
<div style="left:1493.0px;top:991.75px;width:2.5px;height:2.5px;background:#bdbdbd"></div>
<div style="left:1493.0px;top:997.75px;width:2.5px;height:2.5px;background:#bdbdbd"></div>
<div style="left:0px;top:35px;width:1px;height:973px;background:#8e8e8e;"></div>
</body></html>
